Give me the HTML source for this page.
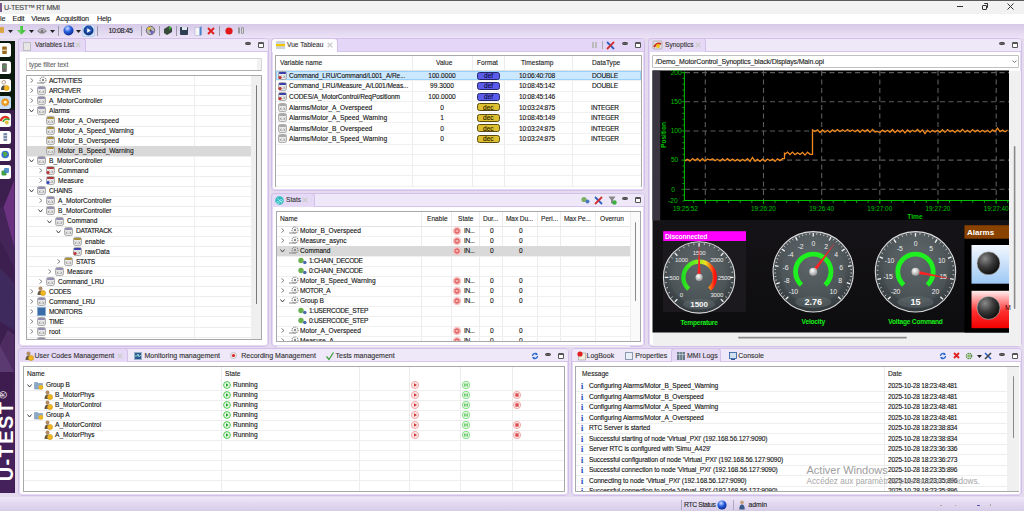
<!DOCTYPE html><html><head><meta charset="utf-8"><style>
*{margin:0;padding:0;box-sizing:border-box}
html,body{width:1024px;height:511px;overflow:hidden}
body{position:relative;background:#e4dbef;font-family:"Liberation Sans",sans-serif;font-size:7.5px;letter-spacing:0;color:#111}
.t{transform-origin:0 50%;transform:scaleX(0.88)}
.c{transform-origin:50% 50%;transform:translateX(-50%) scaleX(0.88)}
div{position:absolute}
.t,.c{height:10px;line-height:10px;white-space:nowrap;-webkit-text-stroke:0.12px currentColor}
svg{position:absolute;overflow:visible}
</style></head><body>
<div style="left:0px;top:0px;width:1024px;height:14px;background:#f2f2f2;border-top:1px solid #5a5a5a"></div>
<div style="left:0px;top:3px;width:2px;height:9px;background:#7a5a8a"></div>
<div class="t" style="left:4px;top:2.9000000000000004px;font-size:7.2px;letter-spacing:-0.35px;color:#444;transform:none">U-TEST™ RT MMI</div>
<div style="left:957px;top:6px;width:6px;height:1.1px;background:#333"></div>
<div style="left:982px;top:4.5px;width:5px;height:5px;border:1.1px solid #333;border-radius:1px"></div>
<div style="left:983.5px;top:3px;width:4.5px;height:4.5px;border-top:1px solid #333;border-right:1px solid #333;border-radius:1px"></div>
<svg style="left:1007px;top:3px" width="7" height="7"><path d="M0.5 0.5L6.5 6.5M6.5 0.5L0.5 6.5" stroke="#333" stroke-width="1"/></svg>
<div style="left:0px;top:14px;width:1024px;height:10px;background:#ffffff"></div>
<div class="t" style="left:0px;top:14.4px;font-size:7.2px;letter-spacing:-0.15px;color:#222;transform:none">le</div>
<div class="t" style="left:12.5px;top:14.4px;font-size:7.2px;letter-spacing:-0.15px;color:#222;transform:none">Edit</div>
<div class="t" style="left:31.3px;top:14.4px;font-size:7.2px;letter-spacing:-0.15px;color:#222;transform:none">Views</div>
<div class="t" style="left:55.8px;top:14.4px;font-size:7.2px;letter-spacing:-0.15px;color:#222;transform:none">Acquisition</div>
<div class="t" style="left:96.9px;top:14.4px;font-size:7.2px;letter-spacing:-0.15px;color:#222;transform:none">Help</div>
<div style="left:0px;top:24px;width:1024px;height:13.5px;background:linear-gradient(#d5c9e7,#ece3f7)"></div>
<div style="left:0px;top:27px;width:4px;height:6px;background:#d9a441;border-radius:1px"></div>
<svg style="left:8px;top:29.5px" width="5" height="3"><path d="M0 0H5L2.5 3Z" fill="#222"/></svg>
<svg style="left:17px;top:25px" width="9" height="11"><path d="M3 1H6V5H9L4.5 9.5L0 5H3Z" fill="#48c040"/><path d="M3 1H4.5V9.5L0 5H3Z" fill="#7ad870" opacity="0.6"/></svg>
<svg style="left:29px;top:29.5px" width="5" height="3"><path d="M0 0H5L2.5 3Z" fill="#222"/></svg>
<svg style="left:37px;top:26px" width="10" height="9"><path d="M1 5Q5 0 9 5Q5 9 1 5Z" fill="none" stroke="#888" stroke-width="1.2"/><circle cx="5" cy="5" r="1.6" fill="#777"/></svg>
<svg style="left:50px;top:29.5px" width="5" height="3"><path d="M0 0H5L2.5 3Z" fill="#222"/></svg>
<div style="left:58px;top:26px;width:1px;height:10px;background:#9a9aa5"></div>
<svg style="left:63px;top:25px" width="11" height="11"><defs><radialGradient id="bs" cx="0.4" cy="0.3" r="0.7"><stop offset="0" stop-color="#cfe0ff"/><stop offset="0.5" stop-color="#2a5fe0"/><stop offset="1" stop-color="#0a2a90"/></radialGradient></defs><circle cx="5.5" cy="5.5" r="5" fill="url(#bs)"/></svg>
<svg style="left:76px;top:29.5px" width="5" height="3"><path d="M0 0H5L2.5 3Z" fill="#222"/></svg>
<div style="left:82px;top:24.5px;width:13px;height:12px;background:#cfe2f8;border:1px solid #bcd4f0;border-radius:1px"></div>
<svg style="left:83px;top:25px" width="11" height="11"><circle cx="5.5" cy="5.5" r="5" fill="#163a8a"/><circle cx="5.5" cy="4.5" r="3.5" fill="#2a62c8" opacity="0.7"/><path d="M4.2 3.2L7.8 5.5L4.2 7.8Z" fill="#fff"/></svg>
<div style="left:97px;top:26px;width:1px;height:10px;background:#9a9aa5"></div>
<div class="t" style="left:108.5px;top:25.9px;font-size:7px;letter-spacing:-0.4px;color:#222;transform:none">10:08:45</div>
<div style="left:141px;top:26px;width:1px;height:10px;background:#9a9aa5"></div>
<svg style="left:146px;top:26px" width="9" height="9"><circle cx="4.5" cy="4.5" r="4.2" fill="#b8b8b8" stroke="#555" stroke-width="0.8"/><path d="M4.5 4.5L4.5 0.8A3.7 3.7 0 0 0 1 3Z" fill="#e8c030"/><path d="M4.5 4.5L8 5.5A3.7 3.7 0 0 1 5 8.2Z" fill="#6a5ad0"/><circle cx="4.5" cy="4.5" r="1" fill="#444"/></svg>
<div style="left:159px;top:26px;width:1px;height:10px;background:#9a9aa5"></div>
<svg style="left:163px;top:25px" width="10" height="10"><path d="M1 4L6 1L9 3V7L4 10L1 8Z" fill="#3a4a3a"/><path d="M6 1L9 3L6 5Z" fill="#3caa3c"/></svg>
<div style="left:176px;top:26px;width:1px;height:10px;background:#9a9aa5"></div>
<div style="left:180px;top:26.5px;width:8px;height:8px;background:#2c3e50;border-radius:1px"></div>
<div style="left:181.5px;top:27px;width:5px;height:3px;background:#dfe6ee"></div>
<svg style="left:194px;top:25.5px" width="8" height="10"><path d="M1 1.5H5.5L7.5 0.5V9L5.5 9.5H1Z" fill="#f4f6fa" stroke="#aab" stroke-width="0.5"/><path d="M5.5 1.5L7.5 0.5V9L5.5 9.5Z" fill="#4a80d0"/></svg>
<svg style="left:207px;top:26.5px" width="8" height="8"><path d="M1 1L7 7M7 1L1 7" stroke="#e02020" stroke-width="2"/></svg>
<div style="left:219px;top:26px;width:1px;height:10px;background:#9a9aa5"></div>
<svg style="left:225px;top:26.5px" width="8" height="8"><circle cx="4" cy="4" r="3.6" fill="#e01818"/></svg>
<div style="left:237.5px;top:27px;width:2.4px;height:7px;background:#d8d8d8;border:0.6px solid #999;border-radius:1px"></div>
<div style="left:241.2px;top:27px;width:2.4px;height:7px;background:#d8d8d8;border:0.6px solid #999;border-radius:1px"></div>
<div style="left:0px;top:41px;width:14.5px;height:452px;background:linear-gradient(180deg,#0a180e 0px,#0a180e 66px,#2a0f3a 72px,#3f1a55 120px,#4a2462 200px,#3a1650 290px,#4c2664 360px,#3a1550 452px)"></div>
<svg style="left:0;top:0" width="15" height="511"><rect x="0" y="110" width="14.3" height="383" fill="#3d1f4f"/><path d="M14.3 180L3.4 207.6L14.3 248Z" fill="#6a3280"/><path d="M0 207.6L3.4 207.6L14.3 248L14.3 268L0 240Z" fill="#45245a"/><path d="M0 268L14.3 283L14.3 330L0 322Z" fill="#3f2a5e"/><path d="M0 345L14.3 372L14.3 335L8 330Z" fill="#4e2c62"/><path d="M0 345L14.3 372L0 372Z" fill="#5a3a70"/><path d="M0 372L14.3 372L14.3 493L0 493Z" fill="#3f1c50"/><path d="M0 430L14.3 400L14.3 493L0 493Z" fill="#44215a"/></svg>
<div style="left:0px;top:43.3px;width:11.2px;height:13.3px;background:#ffffff;border-radius:0 2.5px 2.5px 0"></div>
<div style="left:0px;top:61px;width:11.2px;height:13.3px;background:#ffffff;border-radius:0 2.5px 2.5px 0"></div>
<div style="left:0px;top:78.6px;width:11.2px;height:13.3px;background:#ffffff;border-radius:0 2.5px 2.5px 0"></div>
<div style="left:0px;top:95.6px;width:11.2px;height:13.3px;background:#c6def5;border-radius:0 2.5px 2.5px 0"></div>
<div style="left:0px;top:113.3px;width:11.2px;height:13.3px;background:#ffffff;border-radius:0 2.5px 2.5px 0"></div>
<div style="left:0px;top:130.5px;width:11.2px;height:13.3px;background:#ffffff;border-radius:0 2.5px 2.5px 0"></div>
<div style="left:0px;top:148px;width:11.2px;height:13.3px;background:#ffffff;border-radius:0 2.5px 2.5px 0"></div>
<div style="left:0px;top:165.3px;width:11.2px;height:13.3px;background:#ffffff;border-radius:0 2.5px 2.5px 0"></div>
<svg style="left:0;top:0" width="15" height="185"><rect x="2.2" y="46.5" width="4.6" height="7.5" rx="0.8" fill="#9a6a1e"/><rect x="2.2" y="49.6" width="4.6" height="1.2" fill="#f0e0c0"/><rect x="2" y="63.2" width="4.8" height="8.8" rx="1" fill="#6e6a6a"/><rect x="2.8" y="65" width="3.2" height="3" fill="#5a8a5a"/><circle cx="3.8" cy="82.3" r="1.8" fill="none" stroke="#a08060" stroke-width="0.8"/><path d="M1 90Q1 85.5 3.8 85.5Q6.5 85.5 6.5 90Z" fill="#4a4a4a"/><circle cx="6.6" cy="88" r="2.6" fill="#f2b81e" stroke="#c8901a" stroke-width="0.5"/><circle cx="5.2" cy="102.2" r="3.4" fill="#f0a020" stroke="#e08010" stroke-width="1.2" stroke-dasharray="1 0.8"/><circle cx="5.2" cy="102.2" r="1.4" fill="#fff6d0"/><path d="M0.8 121A4.5 4.5 0 0 1 9 119" stroke="#e03020" stroke-width="2.2" fill="none"/><path d="M3 122A4 4 0 0 1 9.5 120" stroke="#40a030" stroke-width="1.6" fill="none"/><circle cx="6.8" cy="122.5" r="2" fill="#e0c040"/><rect x="3.5" y="133" width="3.6" height="8" fill="#7a8aa8"/><path d="M3.5 135.5h3.6M3.5 138.5h3.6" stroke="#dde" stroke-width="0.8"/><circle cx="5.2" cy="154.5" r="3.8" fill="#3a70d0"/><path d="M3 152Q6 151 7.5 154Q6 157 4 157" fill="#50b040"/><rect x="1.5" y="170.5" width="5" height="5" rx="1" fill="#40a040"/><rect x="4" y="168" width="5" height="5" rx="1" fill="#3a80c0" opacity="0.85"/></svg>
<svg style="left:0;top:380px" width="15" height="113"><text transform="translate(12.8,101.3) rotate(-90)" font-family="Liberation Sans" font-weight="bold" font-size="20" letter-spacing="1.4" fill="#fff">U-TEST</text><text transform="translate(6.6,18.6) rotate(-90)" font-family="Liberation Sans" font-size="10" fill="#fff">®</text></svg>
<div style="left:18px;top:38px;width:251px;height:309.3px;background:#fff;border:1px solid #d3c0ea;border-radius:4px;box-shadow:inset 0 0 0 1px #e6d9f4"></div>
<div style="left:19px;top:39px;width:249px;height:13px;background:#eee8f8;border-bottom:1px solid #d6c4ec;border-radius:3px 3px 0 0"></div>
<div style="left:18px;top:38px;width:68px;height:14px;background:#e6d9f5;border:1px solid #d3c0ea;border-bottom:none;border-radius:4px 4px 0 0"></div>
<div style="left:244.5px;top:41.5px;width:6.2px;height:3px;background:#666;border:0.6px solid #444;border-radius:1.5px"></div>
<div style="left:257.5px;top:41.7px;width:6.2px;height:6.2px;border:1px solid #555;border-top-width:2px;border-radius:1.2px;background:#fff"></div>
<div style="left:270.5px;top:38px;width:374.5px;height:153.2px;background:#fff;border:1px solid #d3c0ea;border-radius:4px;box-shadow:inset 0 0 0 1px #e6d9f4"></div>
<div style="left:271.5px;top:39px;width:372.5px;height:13px;background:#e4d6f7;border-bottom:1px solid #d6c4ec;border-radius:3px 3px 0 0"></div>
<div style="left:270.5px;top:38px;width:67.5px;height:14px;background:#fdfcff;border:1px solid #d3c0ea;border-bottom:none;border-radius:4px 4px 0 0"></div>
<div style="left:622.3px;top:41.5px;width:6.2px;height:3px;background:#666;border:0.6px solid #444;border-radius:1.5px"></div>
<div style="left:634.9px;top:41.7px;width:6.2px;height:6.2px;border:1px solid #555;border-top-width:2px;border-radius:1.2px;background:#fff"></div>
<div style="left:270.5px;top:192.5px;width:374.5px;height:154.8px;background:#fff;border:1px solid #d3c0ea;border-radius:4px;box-shadow:inset 0 0 0 1px #e6d9f4"></div>
<div style="left:271.5px;top:193.5px;width:372.5px;height:13px;background:#eee8f8;border-bottom:1px solid #d6c4ec;border-radius:3px 3px 0 0"></div>
<div style="left:270.5px;top:192.5px;width:44.5px;height:14px;background:#e6d9f5;border:1px solid #d3c0ea;border-bottom:none;border-radius:4px 4px 0 0"></div>
<div style="left:622.3px;top:197px;width:6.2px;height:3px;background:#666;border:0.6px solid #444;border-radius:1.5px"></div>
<div style="left:634.9px;top:197.2px;width:6.2px;height:6.2px;border:1px solid #555;border-top-width:2px;border-radius:1.2px;background:#fff"></div>
<div style="left:648px;top:38px;width:374px;height:309.3px;background:#fff;border:1px solid #d3c0ea;border-radius:4px;box-shadow:inset 0 0 0 1px #e6d9f4"></div>
<div style="left:649px;top:39px;width:372px;height:13px;background:#eee8f8;border-bottom:1px solid #d6c4ec;border-radius:3px 3px 0 0"></div>
<div style="left:648px;top:38px;width:58px;height:14px;background:#e6d9f5;border:1px solid #d3c0ea;border-bottom:none;border-radius:4px 4px 0 0"></div>
<div style="left:999.0px;top:41.5px;width:6.2px;height:3px;background:#666;border:0.6px solid #444;border-radius:1.5px"></div>
<div style="left:1012.0px;top:41.7px;width:6.2px;height:6.2px;border:1px solid #555;border-top-width:2px;border-radius:1.2px;background:#fff"></div>
<div style="left:18px;top:348px;width:550.5px;height:148.3px;background:#fff;border:1px solid #d3c0ea;border-radius:4px;box-shadow:inset 0 0 0 1px #e6d9f4"></div>
<div style="left:19px;top:349px;width:548.5px;height:13px;background:#eee8f8;border-bottom:1px solid #d6c4ec;border-radius:3px 3px 0 0"></div>
<div style="left:18px;top:348px;width:109.5px;height:14px;background:#e6d9f5;border:1px solid #d3c0ea;border-bottom:none;border-radius:4px 4px 0 0"></div>
<div style="left:545.0px;top:352.5px;width:6.2px;height:3px;background:#666;border:0.6px solid #444;border-radius:1.5px"></div>
<div style="left:557.5px;top:352.7px;width:6.2px;height:6.2px;border:1px solid #555;border-top-width:2px;border-radius:1.2px;background:#fff"></div>
<div style="left:570.5px;top:348px;width:451.5px;height:148.3px;background:#fff;border:1px solid #d3c0ea;border-radius:4px;box-shadow:inset 0 0 0 1px #e6d9f4"></div>
<div style="left:571.5px;top:349px;width:449.5px;height:13px;background:#eee8f8;border-bottom:1px solid #d6c4ec;border-radius:3px 3px 0 0"></div>
<div style="left:671px;top:348px;width:50px;height:14px;background:#e6d9f5;border:1px solid #d3c0ea;border-bottom:none;border-radius:4px 4px 0 0"></div>
<div style="left:999.0px;top:352.5px;width:6.2px;height:3px;background:#666;border:0.6px solid #444;border-radius:1.5px"></div>
<div style="left:1012.0px;top:352.7px;width:6.2px;height:6.2px;border:1px solid #555;border-top-width:2px;border-radius:1.2px;background:#fff"></div>
<div style="left:23px;top:42px;width:8px;height:9px;background:#e6e6e6;border:1px solid #bdbdbd"></div>
<div class="t" style="left:34.7px;top:40.4px;color:#333">Variables List</div>
<svg style="left:75px;top:42px" width="6" height="6"><path d="M0.7 0.7L5.3 5.3M5.3 0.7L0.7 5.3" stroke="#cdcdcd" stroke-width="1.4"/></svg>
<div style="left:25.5px;top:58.2px;width:236px;height:12.5px;background:#fff;border:1px solid #d6d6d6;border-bottom-color:#b0b0b0"></div>
<div style="left:257px;top:59.2px;width:4px;height:10.5px;background:#f2f2f2"></div>
<div class="t" style="left:29px;top:59.9px;color:#666">type filter text</div>
<div style="left:25.5px;top:74.6px;width:236.5px;height:265.4px;background:#fff;border:1px solid #a8a8a8"></div>
<div style="left:251.3px;top:75.5px;width:10px;height:263px;background:#efefef"></div>
<div style="left:256px;top:84.7px;width:1.3px;height:219.3px;background:#7a7a7a;border-radius:1px"></div>
<div style="left:194px;top:75.5px;width:1px;height:263px;background:#eeeeee"></div>
<div style="left:26.5px;top:85.3px;width:224.5px;height:1px;background:#ededed"></div>
<div style="left:26.5px;top:95.35px;width:224.5px;height:1px;background:#ededed"></div>
<div style="left:26.5px;top:105.4px;width:224.5px;height:1px;background:#ededed"></div>
<div style="left:26.5px;top:115.45px;width:224.5px;height:1px;background:#ededed"></div>
<div style="left:26.5px;top:125.5px;width:224.5px;height:1px;background:#ededed"></div>
<div style="left:26.5px;top:135.55px;width:224.5px;height:1px;background:#ededed"></div>
<div style="left:26.5px;top:145.6px;width:224.5px;height:1px;background:#ededed"></div>
<div style="left:26.5px;top:155.65px;width:224.5px;height:1px;background:#ededed"></div>
<div style="left:26.5px;top:165.7px;width:224.5px;height:1px;background:#ededed"></div>
<div style="left:26.5px;top:175.75px;width:224.5px;height:1px;background:#ededed"></div>
<div style="left:26.5px;top:185.8px;width:224.5px;height:1px;background:#ededed"></div>
<div style="left:26.5px;top:195.85000000000002px;width:224.5px;height:1px;background:#ededed"></div>
<div style="left:26.5px;top:205.9px;width:224.5px;height:1px;background:#ededed"></div>
<div style="left:26.5px;top:215.95px;width:224.5px;height:1px;background:#ededed"></div>
<div style="left:26.5px;top:226.0px;width:224.5px;height:1px;background:#ededed"></div>
<div style="left:26.5px;top:236.05px;width:224.5px;height:1px;background:#ededed"></div>
<div style="left:26.5px;top:246.10000000000002px;width:224.5px;height:1px;background:#ededed"></div>
<div style="left:26.5px;top:256.15000000000003px;width:224.5px;height:1px;background:#ededed"></div>
<div style="left:26.5px;top:266.2px;width:224.5px;height:1px;background:#ededed"></div>
<div style="left:26.5px;top:276.25px;width:224.5px;height:1px;background:#ededed"></div>
<div style="left:26.5px;top:286.3px;width:224.5px;height:1px;background:#ededed"></div>
<div style="left:26.5px;top:296.35px;width:224.5px;height:1px;background:#ededed"></div>
<div style="left:26.5px;top:306.40000000000003px;width:224.5px;height:1px;background:#ededed"></div>
<div style="left:26.5px;top:316.45px;width:224.5px;height:1px;background:#ededed"></div>
<div style="left:26.5px;top:326.5px;width:224.5px;height:1px;background:#ededed"></div>
<div style="left:26.5px;top:336.55px;width:224.5px;height:1px;background:#ededed"></div>
<div style="left:26.5px;top:145.6px;width:224.5px;height:10px;background:#d9d9d9"></div>
<div style="left:0;top:0;width:260px;height:339px;overflow:hidden">
<svg style="left:30.0px;top:77.8px" width="4" height="5"><path d="M0.5 0.5L3 2.5L0.5 4.5" fill="none" stroke="#707070" stroke-width="0.85"/></svg>
<svg style="left:37px;top:75.8px" width="10" height="9"><circle cx="6" cy="4" r="3" fill="none" stroke="#8a8a8a" stroke-width="1.2" stroke-dasharray="1.2 0.8"/><circle cx="6" cy="4" r="1.2" fill="#8a8a8a"/><path d="M0 7h7" stroke="#8a8a8a" stroke-width="1"/></svg>
<div class="t" style="left:48.5px;top:75.7px;letter-spacing:-0.35px;color:#111">ACTIVITIES</div>
<svg style="left:30.0px;top:87.85px" width="4" height="5"><path d="M0.5 0.5L3 2.5L0.5 4.5" fill="none" stroke="#707070" stroke-width="0.85"/></svg>
<svg style="left:37px;top:85.85px" width="9" height="9"><rect x="0.5" y="0.5" width="8" height="8" rx="1.8" fill="#e9e9e9" stroke="#9a9a9a" stroke-width="0.8"/><rect x="0.9" y="0.9" width="7.2" height="2.2" rx="1" fill="#948cb0"/><path d="M1.8 4.6l1.6 2.4M3.4 4.6l-1.6 2.4M4.3 6.6h0.6M5.6 4.6l1.6 2.4M7.2 4.6l-1.6 2.4" stroke="#8a8a8a" stroke-width="0.6"/></svg>
<div class="t" style="left:48.5px;top:85.75px;letter-spacing:-0.35px;color:#111">ARCHIVER</div>
<svg style="left:30.0px;top:97.9px" width="4" height="5"><path d="M0.5 0.5L3 2.5L0.5 4.5" fill="none" stroke="#707070" stroke-width="0.85"/></svg>
<svg style="left:37px;top:95.9px" width="9" height="9"><rect x="0.5" y="0.5" width="8" height="8" rx="1.8" fill="#e9e9e9" stroke="#9a9a9a" stroke-width="0.8"/><rect x="0.9" y="0.9" width="7.2" height="2.2" rx="1" fill="#948cb0"/><path d="M1.8 4.6l1.6 2.4M3.4 4.6l-1.6 2.4M4.3 6.6h0.6M5.6 4.6l1.6 2.4M7.2 4.6l-1.6 2.4" stroke="#8a8a8a" stroke-width="0.6"/></svg>
<div class="t" style="left:48.5px;top:95.80000000000001px;color:#111">A_MotorController</div>
<svg style="left:29.0px;top:108.95px" width="5" height="4"><path d="M0.5 0.5L2.5 3L4.5 0.5" fill="none" stroke="#3a3a3a" stroke-width="0.95"/></svg>
<svg style="left:37px;top:105.95px" width="9" height="9"><rect x="0.5" y="0.5" width="8" height="8" rx="1.8" fill="#e9e9e9" stroke="#9a9a9a" stroke-width="0.8"/><rect x="0.9" y="0.9" width="7.2" height="2.2" rx="1" fill="#948cb0"/><path d="M1.8 4.6l1.6 2.4M3.4 4.6l-1.6 2.4M4.3 6.6h0.6M5.6 4.6l1.6 2.4M7.2 4.6l-1.6 2.4" stroke="#8a8a8a" stroke-width="0.6"/></svg>
<div class="t" style="left:48.5px;top:105.85000000000001px;color:#111">Alarms</div>
<svg style="left:46px;top:116.0px" width="9" height="9"><rect x="0.5" y="0.5" width="8" height="8" rx="1.8" fill="#e9e9e9" stroke="#9a9a9a" stroke-width="0.8"/><rect x="0.9" y="0.9" width="7.2" height="2.2" rx="1" fill="#a89038"/><path d="M1.8 4.6l1.6 2.4M3.4 4.6l-1.6 2.4M4.3 6.6h0.6M5.6 4.6l1.6 2.4M7.2 4.6l-1.6 2.4" stroke="#8a8a8a" stroke-width="0.6"/></svg>
<div class="t" style="left:57.5px;top:115.9px;color:#111">Motor_A_Overspeed</div>
<svg style="left:46px;top:126.05000000000001px" width="9" height="9"><rect x="0.5" y="0.5" width="8" height="8" rx="1.8" fill="#e9e9e9" stroke="#9a9a9a" stroke-width="0.8"/><rect x="0.9" y="0.9" width="7.2" height="2.2" rx="1" fill="#a89038"/><path d="M1.8 4.6l1.6 2.4M3.4 4.6l-1.6 2.4M4.3 6.6h0.6M5.6 4.6l1.6 2.4M7.2 4.6l-1.6 2.4" stroke="#8a8a8a" stroke-width="0.6"/></svg>
<div class="t" style="left:57.5px;top:125.95000000000002px;color:#111">Motor_A_Speed_Warning</div>
<svg style="left:46px;top:136.1px" width="9" height="9"><rect x="0.5" y="0.5" width="8" height="8" rx="1.8" fill="#e9e9e9" stroke="#9a9a9a" stroke-width="0.8"/><rect x="0.9" y="0.9" width="7.2" height="2.2" rx="1" fill="#a89038"/><path d="M1.8 4.6l1.6 2.4M3.4 4.6l-1.6 2.4M4.3 6.6h0.6M5.6 4.6l1.6 2.4M7.2 4.6l-1.6 2.4" stroke="#8a8a8a" stroke-width="0.6"/></svg>
<div class="t" style="left:57.5px;top:136.0px;color:#111">Motor_B_Overspeed</div>
<svg style="left:46px;top:146.15px" width="9" height="9"><rect x="0.5" y="0.5" width="8" height="8" rx="1.8" fill="#e9e9e9" stroke="#9a9a9a" stroke-width="0.8"/><rect x="0.9" y="0.9" width="7.2" height="2.2" rx="1" fill="#a89038"/><path d="M1.8 4.6l1.6 2.4M3.4 4.6l-1.6 2.4M4.3 6.6h0.6M5.6 4.6l1.6 2.4M7.2 4.6l-1.6 2.4" stroke="#8a8a8a" stroke-width="0.6"/></svg>
<div class="t" style="left:57.5px;top:146.05px;color:#111">Motor_B_Speed_Warning</div>
<svg style="left:29.0px;top:159.2px" width="5" height="4"><path d="M0.5 0.5L2.5 3L4.5 0.5" fill="none" stroke="#3a3a3a" stroke-width="0.95"/></svg>
<svg style="left:37px;top:156.2px" width="9" height="9"><rect x="0.5" y="0.5" width="8" height="8" rx="1.8" fill="#e9e9e9" stroke="#9a9a9a" stroke-width="0.8"/><rect x="0.9" y="0.9" width="7.2" height="2.2" rx="1" fill="#948cb0"/><path d="M1.8 4.6l1.6 2.4M3.4 4.6l-1.6 2.4M4.3 6.6h0.6M5.6 4.6l1.6 2.4M7.2 4.6l-1.6 2.4" stroke="#8a8a8a" stroke-width="0.6"/></svg>
<div class="t" style="left:48.5px;top:156.1px;color:#111">B_MotorController</div>
<svg style="left:39.0px;top:168.25px" width="4" height="5"><path d="M0.5 0.5L3 2.5L0.5 4.5" fill="none" stroke="#707070" stroke-width="0.85"/></svg>
<svg style="left:46px;top:166.25px" width="9" height="9"><rect x="0.5" y="0.5" width="8" height="8" rx="1.8" fill="#e9e9e9" stroke="#9a9a9a" stroke-width="0.8"/><rect x="0.9" y="0.9" width="7.2" height="2.2" rx="1" fill="#b03a3a"/><path d="M1.8 4.6l1.6 2.4M3.4 4.6l-1.6 2.4M4.3 6.6h0.6M5.6 4.6l1.6 2.4M7.2 4.6l-1.6 2.4" stroke="#8a8a8a" stroke-width="0.6"/><circle cx="2" cy="6.5" r="1.5" fill="#c03030"/></svg>
<div class="t" style="left:57.5px;top:166.15px;color:#111">Command</div>
<svg style="left:39.0px;top:178.3px" width="4" height="5"><path d="M0.5 0.5L3 2.5L0.5 4.5" fill="none" stroke="#707070" stroke-width="0.85"/></svg>
<svg style="left:46px;top:176.3px" width="9" height="9"><rect x="0.5" y="0.5" width="8" height="8" rx="1.8" fill="#e9e9e9" stroke="#9a9a9a" stroke-width="0.8"/><rect x="0.9" y="0.9" width="7.2" height="2.2" rx="1" fill="#b03a3a"/><path d="M1.8 4.6l1.6 2.4M3.4 4.6l-1.6 2.4M4.3 6.6h0.6M5.6 4.6l1.6 2.4M7.2 4.6l-1.6 2.4" stroke="#8a8a8a" stroke-width="0.6"/><circle cx="2" cy="6.5" r="1.5" fill="#3040c0"/></svg>
<div class="t" style="left:57.5px;top:176.20000000000002px;color:#111">Measure</div>
<svg style="left:29.0px;top:189.35000000000002px" width="5" height="4"><path d="M0.5 0.5L2.5 3L4.5 0.5" fill="none" stroke="#3a3a3a" stroke-width="0.95"/></svg>
<svg style="left:37px;top:186.35000000000002px" width="9" height="9"><rect x="0.5" y="0.5" width="8" height="8" rx="1.8" fill="#e9e9e9" stroke="#9a9a9a" stroke-width="0.8"/><rect x="0.9" y="0.9" width="7.2" height="2.2" rx="1" fill="#948cb0"/><path d="M1.8 4.6l1.6 2.4M3.4 4.6l-1.6 2.4M4.3 6.6h0.6M5.6 4.6l1.6 2.4M7.2 4.6l-1.6 2.4" stroke="#8a8a8a" stroke-width="0.6"/></svg>
<div class="t" style="left:48.5px;top:186.25000000000003px;letter-spacing:-0.35px;color:#111">CHAINS</div>
<svg style="left:39.0px;top:198.4px" width="4" height="5"><path d="M0.5 0.5L3 2.5L0.5 4.5" fill="none" stroke="#707070" stroke-width="0.85"/></svg>
<svg style="left:46px;top:196.4px" width="9" height="9"><rect x="0.5" y="0.5" width="8" height="8" rx="1.8" fill="#e9e9e9" stroke="#9a9a9a" stroke-width="0.8"/><rect x="0.9" y="0.9" width="7.2" height="2.2" rx="1" fill="#948cb0"/><path d="M1.8 4.6l1.6 2.4M3.4 4.6l-1.6 2.4M4.3 6.6h0.6M5.6 4.6l1.6 2.4M7.2 4.6l-1.6 2.4" stroke="#8a8a8a" stroke-width="0.6"/></svg>
<div class="t" style="left:57.5px;top:196.3px;color:#111">A_MotorController</div>
<svg style="left:38.0px;top:209.45px" width="5" height="4"><path d="M0.5 0.5L2.5 3L4.5 0.5" fill="none" stroke="#3a3a3a" stroke-width="0.95"/></svg>
<svg style="left:46px;top:206.45px" width="9" height="9"><rect x="0.5" y="0.5" width="8" height="8" rx="1.8" fill="#e9e9e9" stroke="#9a9a9a" stroke-width="0.8"/><rect x="0.9" y="0.9" width="7.2" height="2.2" rx="1" fill="#948cb0"/><path d="M1.8 4.6l1.6 2.4M3.4 4.6l-1.6 2.4M4.3 6.6h0.6M5.6 4.6l1.6 2.4M7.2 4.6l-1.6 2.4" stroke="#8a8a8a" stroke-width="0.6"/></svg>
<div class="t" style="left:57.5px;top:206.35px;color:#111">B_MotorController</div>
<svg style="left:47.0px;top:219.5px" width="5" height="4"><path d="M0.5 0.5L2.5 3L4.5 0.5" fill="none" stroke="#3a3a3a" stroke-width="0.95"/></svg>
<svg style="left:55px;top:216.5px" width="9" height="9"><rect x="0.5" y="0.5" width="8" height="8" rx="1.8" fill="#e9e9e9" stroke="#9a9a9a" stroke-width="0.8"/><rect x="0.9" y="0.9" width="7.2" height="2.2" rx="1" fill="#948cb0"/><path d="M1.8 4.6l1.6 2.4M3.4 4.6l-1.6 2.4M4.3 6.6h0.6M5.6 4.6l1.6 2.4M7.2 4.6l-1.6 2.4" stroke="#8a8a8a" stroke-width="0.6"/></svg>
<div class="t" style="left:66.5px;top:216.4px;color:#111">Command</div>
<svg style="left:56.0px;top:229.55px" width="5" height="4"><path d="M0.5 0.5L2.5 3L4.5 0.5" fill="none" stroke="#3a3a3a" stroke-width="0.95"/></svg>
<svg style="left:64px;top:226.55px" width="9" height="9"><rect x="0.5" y="0.5" width="8" height="8" rx="1.8" fill="#e9e9e9" stroke="#9a9a9a" stroke-width="0.8"/><rect x="0.9" y="0.9" width="7.2" height="2.2" rx="1" fill="#948cb0"/><path d="M1.8 4.6l1.6 2.4M3.4 4.6l-1.6 2.4M4.3 6.6h0.6M5.6 4.6l1.6 2.4M7.2 4.6l-1.6 2.4" stroke="#8a8a8a" stroke-width="0.6"/></svg>
<div class="t" style="left:75.5px;top:226.45000000000002px;letter-spacing:-0.35px;color:#111">DATATRACK</div>
<svg style="left:73px;top:236.60000000000002px" width="9" height="9"><rect x="0.5" y="0.5" width="8" height="8" rx="1.8" fill="#e9e9e9" stroke="#9a9a9a" stroke-width="0.8"/><rect x="0.9" y="0.9" width="7.2" height="2.2" rx="1" fill="#a89038"/><path d="M1.8 4.6l1.6 2.4M3.4 4.6l-1.6 2.4M4.3 6.6h0.6M5.6 4.6l1.6 2.4M7.2 4.6l-1.6 2.4" stroke="#8a8a8a" stroke-width="0.6"/></svg>
<div class="t" style="left:84.5px;top:236.50000000000003px;color:#111">enable</div>
<svg style="left:73px;top:246.65000000000003px" width="9" height="9"><rect x="0.5" y="0.5" width="8" height="8" rx="1.8" fill="#e9e9e9" stroke="#9a9a9a" stroke-width="0.8"/><rect x="0.9" y="0.9" width="7.2" height="2.2" rx="1" fill="#3a40a8"/><path d="M1.8 4.6l1.6 2.4M3.4 4.6l-1.6 2.4M4.3 6.6h0.6M5.6 4.6l1.6 2.4M7.2 4.6l-1.6 2.4" stroke="#8a8a8a" stroke-width="0.6"/><circle cx="2" cy="6.5" r="1.5" fill="#c03030"/></svg>
<div class="t" style="left:84.5px;top:246.55000000000004px;color:#111">rawData</div>
<svg style="left:57.0px;top:258.7px" width="4" height="5"><path d="M0.5 0.5L3 2.5L0.5 4.5" fill="none" stroke="#707070" stroke-width="0.85"/></svg>
<svg style="left:64px;top:256.7px" width="9" height="9"><rect x="0.5" y="0.5" width="8" height="8" rx="1.8" fill="#e9e9e9" stroke="#9a9a9a" stroke-width="0.8"/><rect x="0.9" y="0.9" width="7.2" height="2.2" rx="1" fill="#a89038"/><path d="M1.8 4.6l1.6 2.4M3.4 4.6l-1.6 2.4M4.3 6.6h0.6M5.6 4.6l1.6 2.4M7.2 4.6l-1.6 2.4" stroke="#8a8a8a" stroke-width="0.6"/></svg>
<div class="t" style="left:75.5px;top:256.59999999999997px;letter-spacing:-0.35px;color:#111">STATS</div>
<svg style="left:48.0px;top:268.75px" width="4" height="5"><path d="M0.5 0.5L3 2.5L0.5 4.5" fill="none" stroke="#707070" stroke-width="0.85"/></svg>
<svg style="left:55px;top:266.75px" width="9" height="9"><rect x="0.5" y="0.5" width="8" height="8" rx="1.8" fill="#e9e9e9" stroke="#9a9a9a" stroke-width="0.8"/><rect x="0.9" y="0.9" width="7.2" height="2.2" rx="1" fill="#948cb0"/><path d="M1.8 4.6l1.6 2.4M3.4 4.6l-1.6 2.4M4.3 6.6h0.6M5.6 4.6l1.6 2.4M7.2 4.6l-1.6 2.4" stroke="#8a8a8a" stroke-width="0.6"/></svg>
<div class="t" style="left:66.5px;top:266.65px;color:#111">Measure</div>
<svg style="left:39.0px;top:278.8px" width="4" height="5"><path d="M0.5 0.5L3 2.5L0.5 4.5" fill="none" stroke="#707070" stroke-width="0.85"/></svg>
<svg style="left:46px;top:276.8px" width="9" height="9"><rect x="0.5" y="0.5" width="8" height="8" rx="1.8" fill="#e9e9e9" stroke="#9a9a9a" stroke-width="0.8"/><rect x="0.9" y="0.9" width="7.2" height="2.2" rx="1" fill="#948cb0"/><path d="M1.8 4.6l1.6 2.4M3.4 4.6l-1.6 2.4M4.3 6.6h0.6M5.6 4.6l1.6 2.4M7.2 4.6l-1.6 2.4" stroke="#8a8a8a" stroke-width="0.6"/></svg>
<div class="t" style="left:57.5px;top:276.7px;letter-spacing:-0.14px;color:#111">Command_LRU</div>
<svg style="left:30.0px;top:288.85px" width="4" height="5"><path d="M0.5 0.5L3 2.5L0.5 4.5" fill="none" stroke="#707070" stroke-width="0.85"/></svg>
<svg style="left:37px;top:286.35px" width="9" height="10"><circle cx="3.5" cy="2.5" r="2" fill="#b08a60"/><path d="M0.5 9Q0.5 4.5 3.5 4.5Q6.5 4.5 6.5 9Z" fill="#6a5a4a"/><circle cx="6" cy="7" r="2.6" fill="#f0b820" stroke="#c08a10" stroke-width="0.5"/></svg>
<div class="t" style="left:48.5px;top:286.75px;letter-spacing:-0.35px;color:#111">CODES</div>
<svg style="left:30.0px;top:298.90000000000003px" width="4" height="5"><path d="M0.5 0.5L3 2.5L0.5 4.5" fill="none" stroke="#707070" stroke-width="0.85"/></svg>
<svg style="left:37px;top:296.90000000000003px" width="9" height="9"><rect x="0.5" y="0.5" width="8" height="8" rx="1.8" fill="#e9e9e9" stroke="#9a9a9a" stroke-width="0.8"/><rect x="0.9" y="0.9" width="7.2" height="2.2" rx="1" fill="#948cb0"/><path d="M1.8 4.6l1.6 2.4M3.4 4.6l-1.6 2.4M4.3 6.6h0.6M5.6 4.6l1.6 2.4M7.2 4.6l-1.6 2.4" stroke="#8a8a8a" stroke-width="0.6"/></svg>
<div class="t" style="left:48.5px;top:296.8px;letter-spacing:-0.14px;color:#111">Command_LRU</div>
<svg style="left:30.0px;top:308.95px" width="4" height="5"><path d="M0.5 0.5L3 2.5L0.5 4.5" fill="none" stroke="#707070" stroke-width="0.85"/></svg>
<div style="left:37px;top:306.95px;width:9px;height:9px;background:#3a6aa8;border:1px solid #8aaad0"></div>
<div class="t" style="left:48.5px;top:306.84999999999997px;letter-spacing:-0.35px;color:#111">MONITORS</div>
<svg style="left:30.0px;top:319.0px" width="4" height="5"><path d="M0.5 0.5L3 2.5L0.5 4.5" fill="none" stroke="#707070" stroke-width="0.85"/></svg>
<svg style="left:37px;top:317.0px" width="9" height="9"><rect x="0.5" y="0.5" width="8" height="8" rx="1.8" fill="#e9e9e9" stroke="#9a9a9a" stroke-width="0.8"/><rect x="0.9" y="0.9" width="7.2" height="2.2" rx="1" fill="#948cb0"/><path d="M1.8 4.6l1.6 2.4M3.4 4.6l-1.6 2.4M4.3 6.6h0.6M5.6 4.6l1.6 2.4M7.2 4.6l-1.6 2.4" stroke="#8a8a8a" stroke-width="0.6"/></svg>
<div class="t" style="left:48.5px;top:316.9px;letter-spacing:-0.35px;color:#111">TIME</div>
<svg style="left:30.0px;top:329.05px" width="4" height="5"><path d="M0.5 0.5L3 2.5L0.5 4.5" fill="none" stroke="#707070" stroke-width="0.85"/></svg>
<svg style="left:37px;top:327.05px" width="9" height="9"><rect x="0.5" y="0.5" width="8" height="8" rx="1.8" fill="#e9e9e9" stroke="#9a9a9a" stroke-width="0.8"/><rect x="0.9" y="0.9" width="7.2" height="2.2" rx="1" fill="#948cb0"/><path d="M1.8 4.6l1.6 2.4M3.4 4.6l-1.6 2.4M4.3 6.6h0.6M5.6 4.6l1.6 2.4M7.2 4.6l-1.6 2.4" stroke="#8a8a8a" stroke-width="0.6"/></svg>
<div class="t" style="left:48.5px;top:326.95px;color:#111">root</div>
<svg style="left:30.0px;top:339.1px" width="4" height="5"><path d="M0.5 0.5L3 2.5L0.5 4.5" fill="none" stroke="#707070" stroke-width="0.85"/></svg>
<svg style="left:37px;top:337.1px" width="9" height="9"><rect x="0.5" y="0.5" width="8" height="8" rx="1.8" fill="#e9e9e9" stroke="#9a9a9a" stroke-width="0.8"/><rect x="0.9" y="0.9" width="7.2" height="2.2" rx="1" fill="#948cb0"/><path d="M1.8 4.6l1.6 2.4M3.4 4.6l-1.6 2.4M4.3 6.6h0.6M5.6 4.6l1.6 2.4M7.2 4.6l-1.6 2.4" stroke="#8a8a8a" stroke-width="0.6"/></svg>
<div class="t" style="left:48.5px;top:337.0px;color:#111">undefined</div>
</div>
<svg style="left:276px;top:41px" width="9" height="8"><rect x="0" y="0" width="9" height="8" fill="#c9d4df"/><rect x="0" y="3" width="9" height="2.2" fill="#f2c500"/></svg>
<div class="t" style="left:286.75px;top:40.4px;color:#333">Vue Tableau</div>
<svg style="left:327px;top:42px" width="6" height="6"><path d="M0.7 0.7L5.3 5.3M5.3 0.7L0.7 5.3" stroke="#cdcdcd" stroke-width="1.4"/></svg>
<div style="left:592px;top:42px;width:1.6px;height:6px;background:#bbb"></div>
<div style="left:595px;top:42px;width:1.6px;height:6px;background:#bbb"></div>
<div style="left:602px;top:41px;width:1px;height:8px;background:#aaa"></div>
<svg style="left:606px;top:41px" width="9" height="9"><path d="M1 1L8 8" stroke="#3060c0" stroke-width="1.8"/><path d="M8 1L1 8" stroke="#d03030" stroke-width="1.8"/></svg>
<div style="left:275px;top:55px;width:366.5px;height:131.5px;background:#fff;border:1px solid #a8a8a8"></div>
<div style="left:412px;top:56px;width:1px;height:130px;background:#ececec"></div>
<div style="left:472px;top:56px;width:1px;height:130px;background:#ececec"></div>
<div style="left:503.5px;top:56px;width:1px;height:130px;background:#ececec"></div>
<div style="left:571.5px;top:56px;width:1px;height:130px;background:#ececec"></div>
<div style="left:276px;top:69.5px;width:365px;height:1px;background:#e2e2e2"></div>
<div class="t" style="left:280px;top:58.4px;color:#222">Variable name</div>
<div class="t" style="left:436px;top:58.4px;color:#222">Value</div>
<div class="t" style="left:477px;top:58.4px;color:#222">Format</div>
<div class="t" style="left:521px;top:58.4px;color:#222">Timestamp</div>
<div class="t" style="left:592px;top:58.4px;color:#222">DataType</div>
<div style="left:276px;top:80.0px;width:365px;height:1px;background:#f0f0f0"></div>
<div style="left:276px;top:90.6px;width:365px;height:1px;background:#f0f0f0"></div>
<div style="left:276px;top:101.2px;width:365px;height:1px;background:#f0f0f0"></div>
<div style="left:276px;top:111.8px;width:365px;height:1px;background:#f0f0f0"></div>
<div style="left:276px;top:122.4px;width:365px;height:1px;background:#f0f0f0"></div>
<div style="left:276px;top:133.0px;width:365px;height:1px;background:#f0f0f0"></div>
<div style="left:276px;top:143.6px;width:365px;height:1px;background:#f0f0f0"></div>
<div style="left:276px;top:154.2px;width:365px;height:1px;background:#f0f0f0"></div>
<div style="left:276px;top:164.8px;width:365px;height:1px;background:#f0f0f0"></div>
<div style="left:276px;top:175.39999999999998px;width:365px;height:1px;background:#f0f0f0"></div>
<div style="left:276px;top:186.0px;width:365px;height:1px;background:#f0f0f0"></div>
<div style="left:276px;top:70.5px;width:365px;height:9.3px;background:#cce8ff;border:1px solid #99d1ff"></div>
<svg style="left:278px;top:71.0px" width="9" height="9"><rect x="0.5" y="0.5" width="8" height="8" rx="1.8" fill="#e9e9e9" stroke="#9a9a9a" stroke-width="0.8"/><rect x="0.9" y="0.9" width="7.2" height="2.2" rx="1" fill="#3a40a8"/><path d="M1.8 4.6l1.6 2.4M3.4 4.6l-1.6 2.4M4.3 6.6h0.6M5.6 4.6l1.6 2.4M7.2 4.6l-1.6 2.4" stroke="#8a8a8a" stroke-width="0.6"/><circle cx="2" cy="6.5" r="1.6" fill="#c03030"/></svg>
<div class="t" style="left:288.7px;top:70.9px;letter-spacing:-0.13px;color:#111">Command_LRU/Command/L001_A/Re...</div>
<div class="c" style="left:442px;top:70.9px;color:#111;">100.0000</div>
<div style="left:476.5px;top:71.5px;width:23px;height:8px;background:#5c5cec;border:1px solid #26266a;border-radius:2.5px"></div>
<div class="t" style="left:483.5px;top:70.9px;color:#0c0c3a">def</div>
<div class="c" style="left:536.7px;top:70.9px;letter-spacing:-0.24px;color:#111;">10:06:40:708</div>
<div class="c" style="left:605px;top:70.9px;letter-spacing:-0.24px;color:#111;">DOUBLE</div>
<svg style="left:278px;top:81.55px" width="9" height="9"><rect x="0.5" y="0.5" width="8" height="8" rx="1.8" fill="#e9e9e9" stroke="#9a9a9a" stroke-width="0.8"/><rect x="0.9" y="0.9" width="7.2" height="2.2" rx="1" fill="#3a40a8"/><path d="M1.8 4.6l1.6 2.4M3.4 4.6l-1.6 2.4M4.3 6.6h0.6M5.6 4.6l1.6 2.4M7.2 4.6l-1.6 2.4" stroke="#8a8a8a" stroke-width="0.6"/><circle cx="2" cy="6.5" r="1.6" fill="#c03030"/></svg>
<div class="t" style="left:288.7px;top:81.45px;letter-spacing:-0.12px;color:#111">Command_LRU/Measure_A/L001/Meas...</div>
<div class="c" style="left:442px;top:81.45px;color:#111;">99.3000</div>
<div style="left:476.5px;top:82.05px;width:23px;height:8px;background:#5c5cec;border:1px solid #26266a;border-radius:2.5px"></div>
<div class="t" style="left:483.5px;top:81.45px;color:#0c0c3a">def</div>
<div class="c" style="left:536.7px;top:81.45px;letter-spacing:-0.24px;color:#111;">10:08:45:142</div>
<div class="c" style="left:605px;top:81.45px;letter-spacing:-0.24px;color:#111;">DOUBLE</div>
<svg style="left:278px;top:92.1px" width="9" height="9"><rect x="0.5" y="0.5" width="8" height="8" rx="1.8" fill="#e9e9e9" stroke="#9a9a9a" stroke-width="0.8"/><rect x="0.9" y="0.9" width="7.2" height="2.2" rx="1" fill="#3a40a8"/><path d="M1.8 4.6l1.6 2.4M3.4 4.6l-1.6 2.4M4.3 6.6h0.6M5.6 4.6l1.6 2.4M7.2 4.6l-1.6 2.4" stroke="#8a8a8a" stroke-width="0.6"/><circle cx="2" cy="6.5" r="1.6" fill="#c03030"/></svg>
<div class="t" style="left:288.7px;top:92.0px;letter-spacing:-0.12px;color:#111">CODES/A_MotorControl/ReqPositionm</div>
<div class="c" style="left:442px;top:92.0px;color:#111;">100.0000</div>
<div style="left:476.5px;top:92.6px;width:23px;height:8px;background:#5c5cec;border:1px solid #26266a;border-radius:2.5px"></div>
<div class="t" style="left:483.5px;top:92.0px;color:#0c0c3a">def</div>
<div class="c" style="left:536.7px;top:92.0px;letter-spacing:-0.24px;color:#111;">10:08:45:146</div>
<div class="c" style="left:605px;top:92.0px;letter-spacing:-0.24px;color:#111;"></div>
<svg style="left:278px;top:102.65px" width="9" height="9"><rect x="0.5" y="0.5" width="8" height="8" rx="1.8" fill="#e9e9e9" stroke="#9a9a9a" stroke-width="0.8"/><rect x="0.9" y="0.9" width="7.2" height="2.2" rx="1" fill="#a8a8a8"/><path d="M1.8 4.6l1.6 2.4M3.4 4.6l-1.6 2.4M4.3 6.6h0.6M5.6 4.6l1.6 2.4M7.2 4.6l-1.6 2.4" stroke="#8a8a8a" stroke-width="0.6"/></svg>
<div class="t" style="left:288.7px;top:102.55000000000001px;color:#111">Alarms/Motor_A_Overspeed</div>
<div class="c" style="left:442px;top:102.55000000000001px;color:#111;">0</div>
<div style="left:476.5px;top:103.15px;width:23px;height:8px;background:#dcc032;border:1px solid #5a4a10;border-radius:2.5px"></div>
<div class="t" style="left:483px;top:102.55000000000001px;color:#2a2000">dec</div>
<div class="c" style="left:536.7px;top:102.55000000000001px;letter-spacing:-0.24px;color:#111;">10:03:24:875</div>
<div class="c" style="left:605px;top:102.55000000000001px;letter-spacing:-0.24px;color:#111;">INTEGER</div>
<svg style="left:278px;top:113.2px" width="9" height="9"><rect x="0.5" y="0.5" width="8" height="8" rx="1.8" fill="#e9e9e9" stroke="#9a9a9a" stroke-width="0.8"/><rect x="0.9" y="0.9" width="7.2" height="2.2" rx="1" fill="#a8a8a8"/><path d="M1.8 4.6l1.6 2.4M3.4 4.6l-1.6 2.4M4.3 6.6h0.6M5.6 4.6l1.6 2.4M7.2 4.6l-1.6 2.4" stroke="#8a8a8a" stroke-width="0.6"/></svg>
<div class="t" style="left:288.7px;top:113.10000000000001px;color:#111">Alarms/Motor_A_Speed_Warning</div>
<div class="c" style="left:442px;top:113.10000000000001px;color:#111;">1</div>
<div style="left:476.5px;top:113.7px;width:23px;height:8px;background:#dcc032;border:1px solid #5a4a10;border-radius:2.5px"></div>
<div class="t" style="left:483px;top:113.10000000000001px;color:#2a2000">dec</div>
<div class="c" style="left:536.7px;top:113.10000000000001px;letter-spacing:-0.24px;color:#111;">10:08:45:149</div>
<div class="c" style="left:605px;top:113.10000000000001px;letter-spacing:-0.24px;color:#111;">INTEGER</div>
<svg style="left:278px;top:123.75px" width="9" height="9"><rect x="0.5" y="0.5" width="8" height="8" rx="1.8" fill="#e9e9e9" stroke="#9a9a9a" stroke-width="0.8"/><rect x="0.9" y="0.9" width="7.2" height="2.2" rx="1" fill="#a8a8a8"/><path d="M1.8 4.6l1.6 2.4M3.4 4.6l-1.6 2.4M4.3 6.6h0.6M5.6 4.6l1.6 2.4M7.2 4.6l-1.6 2.4" stroke="#8a8a8a" stroke-width="0.6"/></svg>
<div class="t" style="left:288.7px;top:123.65px;color:#111">Alarms/Motor_B_Overspeed</div>
<div class="c" style="left:442px;top:123.65px;color:#111;">0</div>
<div style="left:476.5px;top:124.25px;width:23px;height:8px;background:#dcc032;border:1px solid #5a4a10;border-radius:2.5px"></div>
<div class="t" style="left:483px;top:123.65px;color:#2a2000">dec</div>
<div class="c" style="left:536.7px;top:123.65px;letter-spacing:-0.24px;color:#111;">10:03:24:875</div>
<div class="c" style="left:605px;top:123.65px;letter-spacing:-0.24px;color:#111;">INTEGER</div>
<svg style="left:278px;top:134.3px" width="9" height="9"><rect x="0.5" y="0.5" width="8" height="8" rx="1.8" fill="#e9e9e9" stroke="#9a9a9a" stroke-width="0.8"/><rect x="0.9" y="0.9" width="7.2" height="2.2" rx="1" fill="#a8a8a8"/><path d="M1.8 4.6l1.6 2.4M3.4 4.6l-1.6 2.4M4.3 6.6h0.6M5.6 4.6l1.6 2.4M7.2 4.6l-1.6 2.4" stroke="#8a8a8a" stroke-width="0.6"/></svg>
<div class="t" style="left:288.7px;top:134.20000000000002px;color:#111">Alarms/Motor_B_Speed_Warning</div>
<div class="c" style="left:442px;top:134.20000000000002px;color:#111;">0</div>
<div style="left:476.5px;top:134.8px;width:23px;height:8px;background:#dcc032;border:1px solid #5a4a10;border-radius:2.5px"></div>
<div class="t" style="left:483px;top:134.20000000000002px;color:#2a2000">dec</div>
<div class="c" style="left:536.7px;top:134.20000000000002px;letter-spacing:-0.24px;color:#111;">10:03:24:875</div>
<div class="c" style="left:605px;top:134.20000000000002px;letter-spacing:-0.24px;color:#111;">INTEGER</div>
<svg style="left:275px;top:195.5px" width="9" height="9"><circle cx="4.5" cy="4.5" r="4.3" fill="#30bcc4"/><path d="M2.3 2.3L6.7 6.7M2.8 5.5a1.2 1.2 0 1 0 0.1 0M6.2 3.5a1.2 1.2 0 1 0 0.1 0" stroke="#c8f0f2" stroke-width="0.8" fill="none"/></svg>
<div class="t" style="left:286px;top:195.4px;color:#333">Stats</div>
<svg style="left:302px;top:197px" width="6" height="6"><path d="M0.7 0.7L5.3 5.3M5.3 0.7L0.7 5.3" stroke="#cdcdcd" stroke-width="1.4"/></svg>
<svg style="left:581px;top:196px" width="9" height="8"><circle cx="3" cy="3.5" r="2.6" fill="#7ab060"/><circle cx="6.5" cy="5.5" r="2" fill="#4a7ac0"/></svg>
<svg style="left:594px;top:196px" width="9" height="9"><path d="M1 1L8 8" stroke="#3060c0" stroke-width="1.8"/><path d="M8 1L1 8" stroke="#d03030" stroke-width="1.8"/></svg>
<svg style="left:608px;top:196px" width="9" height="9"><path d="M0.5 0.5H7.5L5 4V8L3 7V4Z" fill="#888"/><circle cx="6.5" cy="6.5" r="2.2" fill="#3ab040"/></svg>
<div style="left:276px;top:211px;width:365px;height:130.5px;background:#fff;border:1px solid #a8a8a8"></div>
<div style="left:421px;top:212px;width:1px;height:129px;background:#ececec"></div>
<div style="left:450.5px;top:212px;width:1px;height:129px;background:#ececec"></div>
<div style="left:479px;top:212px;width:1px;height:129px;background:#ececec"></div>
<div style="left:502px;top:212px;width:1px;height:129px;background:#ececec"></div>
<div style="left:537px;top:212px;width:1px;height:129px;background:#ececec"></div>
<div style="left:560px;top:212px;width:1px;height:129px;background:#ececec"></div>
<div style="left:594.5px;top:212px;width:1px;height:129px;background:#ececec"></div>
<div style="left:629.5px;top:212px;width:1px;height:129px;background:#ececec"></div>
<div style="left:631px;top:212px;width:9px;height:129px;background:#fafafa"></div>
<div style="left:634.5px;top:222px;width:1.6px;height:79px;background:#8a8a8a;border-radius:1px"></div>
<div style="left:277px;top:225.5px;width:353px;height:1px;background:#e2e2e2"></div>
<div class="t" style="left:280px;top:214.15px;color:#222">Name</div>
<div class="t" style="left:426.75px;top:214.15px;color:#222">Enable</div>
<div class="t" style="left:458px;top:214.15px;color:#222">State</div>
<div class="t" style="left:483px;top:214.15px;letter-spacing:-0.12px;color:#222">Dur...</div>
<div class="t" style="left:506px;top:214.15px;letter-spacing:-0.14px;color:#222">Max Du...</div>
<div class="t" style="left:540.75px;top:214.15px;color:#222">Peri...</div>
<div class="t" style="left:564px;top:214.15px;letter-spacing:-0.14px;color:#222">Max Pe...</div>
<div class="t" style="left:600px;top:214.15px;color:#222">Overrun</div>
<div style="left:277px;top:236px;width:353px;height:1px;background:#f0f0f0"></div>
<div style="left:277px;top:246px;width:353px;height:1px;background:#f0f0f0"></div>
<div style="left:277px;top:256px;width:353px;height:1px;background:#f0f0f0"></div>
<div style="left:277px;top:266px;width:353px;height:1px;background:#f0f0f0"></div>
<div style="left:277px;top:276px;width:353px;height:1px;background:#f0f0f0"></div>
<div style="left:277px;top:286px;width:353px;height:1px;background:#f0f0f0"></div>
<div style="left:277px;top:296px;width:353px;height:1px;background:#f0f0f0"></div>
<div style="left:277px;top:306px;width:353px;height:1px;background:#f0f0f0"></div>
<div style="left:277px;top:316px;width:353px;height:1px;background:#f0f0f0"></div>
<div style="left:277px;top:326px;width:353px;height:1px;background:#f0f0f0"></div>
<div style="left:277px;top:336px;width:353px;height:1px;background:#f0f0f0"></div>
<div style="left:277px;top:346px;width:353px;height:1px;background:#f0f0f0"></div>
<div style="left:277px;top:246px;width:353px;height:9.5px;background:#d9d9d9"></div>
<div style="left:0;top:0;width:1024px;height:341px;overflow:hidden">
<svg style="left:280.75px;top:228.25px" width="4" height="5"><path d="M0.5 0.5L3 2.5L0.5 4.5" fill="none" stroke="#707070" stroke-width="0.85"/></svg>
<svg style="left:288.5px;top:226.25px" width="10" height="9"><circle cx="6" cy="4" r="3" fill="none" stroke="#8a8a8a" stroke-width="1.2" stroke-dasharray="1.2 0.8"/><circle cx="6" cy="4" r="1.2" fill="#8a8a8a"/><path d="M0 7h7" stroke="#8a8a8a" stroke-width="1"/></svg>
<div class="t" style="left:300.25px;top:226.15px;color:#111">Motor_B_Overspeed</div>
<svg style="left:452.9px;top:226.75px" width="8" height="8"><circle cx="4" cy="4" r="3.8" fill="#fdecec" stroke="#f2a8a8" stroke-width="0.7"/><circle cx="4" cy="4" r="2.7" fill="#e05050"/><path d="M3.2 2.7v2.6M4.8 2.7v2.6" stroke="#fff" stroke-width="0.8"/></svg>
<div class="t" style="left:464.25px;top:226.15px;letter-spacing:-0.35px;color:#111">IN...</div>
<div class="t" style="left:489.5px;top:226.15px;color:#111">0</div>
<div class="t" style="left:519px;top:226.15px;color:#111">0</div>
<svg style="left:280.75px;top:238.25px" width="4" height="5"><path d="M0.5 0.5L3 2.5L0.5 4.5" fill="none" stroke="#707070" stroke-width="0.85"/></svg>
<svg style="left:288.5px;top:236.25px" width="10" height="9"><circle cx="6" cy="4" r="3" fill="none" stroke="#8a8a8a" stroke-width="1.2" stroke-dasharray="1.2 0.8"/><circle cx="6" cy="4" r="1.2" fill="#8a8a8a"/><path d="M0 7h7" stroke="#8a8a8a" stroke-width="1"/></svg>
<div class="t" style="left:300.25px;top:236.15px;color:#111">Measure_async</div>
<svg style="left:452.9px;top:236.75px" width="8" height="8"><circle cx="4" cy="4" r="3.8" fill="#fdecec" stroke="#f2a8a8" stroke-width="0.7"/><circle cx="4" cy="4" r="2.7" fill="#e05050"/><path d="M3.2 2.7v2.6M4.8 2.7v2.6" stroke="#fff" stroke-width="0.8"/></svg>
<div class="t" style="left:464.25px;top:236.15px;letter-spacing:-0.35px;color:#111">IN...</div>
<div class="t" style="left:489.5px;top:236.15px;color:#111">0</div>
<div class="t" style="left:519px;top:236.15px;color:#111">0</div>
<svg style="left:279.75px;top:249.25px" width="5" height="4"><path d="M0.5 0.5L2.5 3L4.5 0.5" fill="none" stroke="#3a3a3a" stroke-width="0.95"/></svg>
<svg style="left:288.5px;top:246.25px" width="10" height="9"><circle cx="6" cy="4" r="3" fill="none" stroke="#8a8a8a" stroke-width="1.2" stroke-dasharray="1.2 0.8"/><circle cx="6" cy="4" r="1.2" fill="#8a8a8a"/><path d="M0 7h7" stroke="#8a8a8a" stroke-width="1"/></svg>
<div class="t" style="left:300.25px;top:246.15px;color:#111">Command</div>
<svg style="left:452.9px;top:246.75px" width="8" height="8"><circle cx="4" cy="4" r="3.8" fill="#fdecec" stroke="#f2a8a8" stroke-width="0.7"/><circle cx="4" cy="4" r="2.7" fill="#e05050"/><path d="M3.2 2.7v2.6M4.8 2.7v2.6" stroke="#fff" stroke-width="0.8"/></svg>
<div class="t" style="left:464.25px;top:246.15px;letter-spacing:-0.35px;color:#111">IN...</div>
<div class="t" style="left:489.5px;top:246.15px;color:#111">0</div>
<div class="t" style="left:519px;top:246.15px;color:#111">0</div>
<svg style="left:298px;top:256.75px" width="9" height="8"><circle cx="3" cy="3.5" r="2.7" fill="#6ab050"/><circle cx="6.8" cy="5.5" r="1.8" fill="#4a6ab0"/></svg>
<div class="t" style="left:309px;top:256.15px;letter-spacing:-0.35px;color:#111">1:CHAIN_DECODE</div>
<svg style="left:298px;top:266.75px" width="9" height="8"><circle cx="3" cy="3.5" r="2.7" fill="#6ab050"/><circle cx="6.8" cy="5.5" r="1.8" fill="#4a6ab0"/></svg>
<div class="t" style="left:309px;top:266.15px;letter-spacing:-0.35px;color:#111">0:CHAIN_ENCODE</div>
<svg style="left:280.75px;top:278.25px" width="4" height="5"><path d="M0.5 0.5L3 2.5L0.5 4.5" fill="none" stroke="#707070" stroke-width="0.85"/></svg>
<svg style="left:288.5px;top:276.25px" width="10" height="9"><circle cx="6" cy="4" r="3" fill="none" stroke="#8a8a8a" stroke-width="1.2" stroke-dasharray="1.2 0.8"/><circle cx="6" cy="4" r="1.2" fill="#8a8a8a"/><path d="M0 7h7" stroke="#8a8a8a" stroke-width="1"/></svg>
<div class="t" style="left:300.25px;top:276.15px;color:#111">Motor_B_Speed_Warning</div>
<svg style="left:452.9px;top:276.75px" width="8" height="8"><circle cx="4" cy="4" r="3.8" fill="#fdecec" stroke="#f2a8a8" stroke-width="0.7"/><circle cx="4" cy="4" r="2.7" fill="#e05050"/><path d="M3.2 2.7v2.6M4.8 2.7v2.6" stroke="#fff" stroke-width="0.8"/></svg>
<div class="t" style="left:464.25px;top:276.15px;letter-spacing:-0.35px;color:#111">IN...</div>
<div class="t" style="left:489.5px;top:276.15px;color:#111">0</div>
<div class="t" style="left:519px;top:276.15px;color:#111">0</div>
<svg style="left:280.75px;top:288.25px" width="4" height="5"><path d="M0.5 0.5L3 2.5L0.5 4.5" fill="none" stroke="#707070" stroke-width="0.85"/></svg>
<svg style="left:288.5px;top:286.25px" width="10" height="9"><circle cx="6" cy="4" r="3" fill="none" stroke="#8a8a8a" stroke-width="1.2" stroke-dasharray="1.2 0.8"/><circle cx="6" cy="4" r="1.2" fill="#8a8a8a"/><path d="M0 7h7" stroke="#8a8a8a" stroke-width="1"/></svg>
<div class="t" style="left:300.25px;top:286.15px;letter-spacing:-0.35px;color:#111">MOTOR_A</div>
<svg style="left:452.9px;top:286.75px" width="8" height="8"><circle cx="4" cy="4" r="3.8" fill="#fdecec" stroke="#f2a8a8" stroke-width="0.7"/><circle cx="4" cy="4" r="2.7" fill="#e05050"/><path d="M3.2 2.7v2.6M4.8 2.7v2.6" stroke="#fff" stroke-width="0.8"/></svg>
<div class="t" style="left:464.25px;top:286.15px;letter-spacing:-0.35px;color:#111">IN...</div>
<div class="t" style="left:489.5px;top:286.15px;color:#111">0</div>
<div class="t" style="left:519px;top:286.15px;color:#111">0</div>
<svg style="left:279.75px;top:299.25px" width="5" height="4"><path d="M0.5 0.5L2.5 3L4.5 0.5" fill="none" stroke="#3a3a3a" stroke-width="0.95"/></svg>
<svg style="left:288.5px;top:296.25px" width="10" height="9"><circle cx="6" cy="4" r="3" fill="none" stroke="#8a8a8a" stroke-width="1.2" stroke-dasharray="1.2 0.8"/><circle cx="6" cy="4" r="1.2" fill="#8a8a8a"/><path d="M0 7h7" stroke="#8a8a8a" stroke-width="1"/></svg>
<div class="t" style="left:300.25px;top:296.15px;letter-spacing:-0.12px;color:#111">Group B</div>
<svg style="left:452.9px;top:296.75px" width="8" height="8"><circle cx="4" cy="4" r="3.8" fill="#fdecec" stroke="#f2a8a8" stroke-width="0.7"/><circle cx="4" cy="4" r="2.7" fill="#e05050"/><path d="M3.2 2.7v2.6M4.8 2.7v2.6" stroke="#fff" stroke-width="0.8"/></svg>
<div class="t" style="left:464.25px;top:296.15px;letter-spacing:-0.35px;color:#111">IN...</div>
<div class="t" style="left:489.5px;top:296.15px;color:#111">0</div>
<div class="t" style="left:519px;top:296.15px;color:#111">0</div>
<svg style="left:298px;top:306.75px" width="9" height="8"><circle cx="3" cy="3.5" r="2.7" fill="#6ab050"/><circle cx="6.8" cy="5.5" r="1.8" fill="#4a6ab0"/></svg>
<div class="t" style="left:309px;top:306.15px;letter-spacing:-0.35px;color:#111">1:USERCODE_STEP</div>
<svg style="left:298px;top:316.75px" width="9" height="8"><circle cx="3" cy="3.5" r="2.7" fill="#6ab050"/><circle cx="6.8" cy="5.5" r="1.8" fill="#4a6ab0"/></svg>
<div class="t" style="left:309px;top:316.15px;letter-spacing:-0.35px;color:#111">0:USERCODE_STEP</div>
<svg style="left:280.75px;top:328.25px" width="4" height="5"><path d="M0.5 0.5L3 2.5L0.5 4.5" fill="none" stroke="#707070" stroke-width="0.85"/></svg>
<svg style="left:288.5px;top:326.25px" width="10" height="9"><circle cx="6" cy="4" r="3" fill="none" stroke="#8a8a8a" stroke-width="1.2" stroke-dasharray="1.2 0.8"/><circle cx="6" cy="4" r="1.2" fill="#8a8a8a"/><path d="M0 7h7" stroke="#8a8a8a" stroke-width="1"/></svg>
<div class="t" style="left:300.25px;top:326.15px;color:#111">Motor_A_Overspeed</div>
<svg style="left:452.9px;top:326.75px" width="8" height="8"><circle cx="4" cy="4" r="3.8" fill="#fdecec" stroke="#f2a8a8" stroke-width="0.7"/><circle cx="4" cy="4" r="2.7" fill="#e05050"/><path d="M3.2 2.7v2.6M4.8 2.7v2.6" stroke="#fff" stroke-width="0.8"/></svg>
<div class="t" style="left:464.25px;top:326.15px;letter-spacing:-0.35px;color:#111">IN...</div>
<div class="t" style="left:489.5px;top:326.15px;color:#111">0</div>
<div class="t" style="left:519px;top:326.15px;color:#111">0</div>
<svg style="left:280.75px;top:338.25px" width="4" height="5"><path d="M0.5 0.5L3 2.5L0.5 4.5" fill="none" stroke="#707070" stroke-width="0.85"/></svg>
<svg style="left:288.5px;top:336.25px" width="10" height="9"><circle cx="6" cy="4" r="3" fill="none" stroke="#8a8a8a" stroke-width="1.2" stroke-dasharray="1.2 0.8"/><circle cx="6" cy="4" r="1.2" fill="#8a8a8a"/><path d="M0 7h7" stroke="#8a8a8a" stroke-width="1"/></svg>
<div class="t" style="left:300.25px;top:336.15px;color:#111">Measure_A</div>
<svg style="left:452.9px;top:336.75px" width="8" height="8"><circle cx="4" cy="4" r="3.8" fill="#fdecec" stroke="#f2a8a8" stroke-width="0.7"/><circle cx="4" cy="4" r="2.7" fill="#e05050"/><path d="M3.2 2.7v2.6M4.8 2.7v2.6" stroke="#fff" stroke-width="0.8"/></svg>
<div class="t" style="left:464.25px;top:336.15px;letter-spacing:-0.35px;color:#111">IN...</div>
<div class="t" style="left:489.5px;top:336.15px;color:#111">0</div>
<div class="t" style="left:519px;top:336.15px;color:#111">0</div>
</div>
<svg style="left:653px;top:41px" width="10" height="9"><rect x="0" y="0" width="9" height="8" rx="1" fill="#e0e0e0" stroke="#999" stroke-width="0.6"/><path d="M1 6Q4 1 8 3" stroke="#d03020" stroke-width="2" fill="none"/><circle cx="5" cy="5" r="2" fill="#f0c020"/></svg>
<div class="t" style="left:664.5px;top:40.4px;color:#333">Synoptics</div>
<svg style="left:695px;top:42px" width="6" height="6"><path d="M0.7 0.7L5.3 5.3M5.3 0.7L0.7 5.3" stroke="#cdcdcd" stroke-width="1.4"/></svg>
<div style="left:652px;top:55px;width:367px;height:13px;background:#fff;border:1px solid #c0c0c0;border-radius:1px"></div>
<div class="t" style="left:655.5px;top:56.9px;font-size:7px;letter-spacing:-0.15px;color:#222;transform:none">/Demo_MotorControl_Synoptics_black/Displays/Main.opi</div>
<svg style="left:1012px;top:60px" width="5" height="3"><path d="M0.5 0.5L2.5 2.5L4.5 0.5" fill="none" stroke="#555" stroke-width="0.8"/></svg>
<div style="left:652.5px;top:70.5px;width:368px;height:275px;background:#f0f0f0"></div>
<svg style="left:0;top:0" width="1024" height="511"><defs><linearGradient id="gbg" x1="0" y1="0" x2="0" y2="1"><stop offset="0" stop-color="#1f1c22"/><stop offset="1" stop-color="#0d0c0e"/></linearGradient><radialGradient id="face" cx="0.5" cy="0.35" r="0.7"><stop offset="0" stop-color="#6a7276"/><stop offset="0.6" stop-color="#4a5256"/><stop offset="1" stop-color="#2e3438"/></radialGradient><radialGradient id="hub" cx="0.4" cy="0.35" r="0.7"><stop offset="0" stop-color="#ffffff"/><stop offset="1" stop-color="#909090"/></radialGradient><radialGradient id="ball" cx="0.35" cy="0.3" r="0.75"><stop offset="0" stop-color="#8a8a8a"/><stop offset="0.5" stop-color="#3a3a3a"/><stop offset="1" stop-color="#0a0a0a"/></radialGradient><linearGradient id="abl" x1="0" y1="0" x2="0" y2="1"><stop offset="0" stop-color="#f4f8ff"/><stop offset="1" stop-color="#9cc8f4"/></linearGradient><linearGradient id="ared" x1="0" y1="0" x2="0" y2="1"><stop offset="0" stop-color="#fff0f0"/><stop offset="0.55" stop-color="#ff3030"/><stop offset="1" stop-color="#f00000"/></linearGradient><linearGradient id="tarc" x1="0" y1="0" x2="1" y2="0"><stop offset="0" stop-color="#20e020"/><stop offset="0.45" stop-color="#80f020"/><stop offset="0.7" stop-color="#f0e020"/><stop offset="1" stop-color="#ff1010"/></linearGradient></defs><rect x="652.5" y="70.5" width="356.5" height="262" fill="url(#gbg)"/><rect x="652.5" y="70.5" width="8" height="150" fill="#3a3541"/><rect x="660.3" y="70.8" width="348.7" height="149.2" fill="#000"/><line x1="685" y1="72.60" x2="1009" y2="72.60" stroke="#5c5c5c" stroke-width="1.1" stroke-dasharray="5 3.5"/><line x1="685" y1="101.77" x2="1009" y2="101.77" stroke="#5c5c5c" stroke-width="1.1" stroke-dasharray="5 3.5"/><line x1="685" y1="130.95" x2="1009" y2="130.95" stroke="#5c5c5c" stroke-width="1.1" stroke-dasharray="5 3.5"/><line x1="685" y1="160.12" x2="1009" y2="160.12" stroke="#5c5c5c" stroke-width="1.1" stroke-dasharray="5 3.5"/><line x1="685" y1="189.30" x2="1009" y2="189.30" stroke="#5c5c5c" stroke-width="1.1" stroke-dasharray="5 3.5"/><line x1="705.3" y1="71" x2="705.3" y2="200" stroke="#5c5c5c" stroke-width="1.1" stroke-dasharray="5 3.5"/><line x1="763.5" y1="71" x2="763.5" y2="200" stroke="#5c5c5c" stroke-width="1.1" stroke-dasharray="5 3.5"/><line x1="821.7" y1="71" x2="821.7" y2="200" stroke="#5c5c5c" stroke-width="1.1" stroke-dasharray="5 3.5"/><line x1="879.8" y1="71" x2="879.8" y2="200" stroke="#5c5c5c" stroke-width="1.1" stroke-dasharray="5 3.5"/><line x1="938" y1="71" x2="938" y2="200" stroke="#5c5c5c" stroke-width="1.1" stroke-dasharray="5 3.5"/><line x1="996.2" y1="71" x2="996.2" y2="200" stroke="#5c5c5c" stroke-width="1.1" stroke-dasharray="5 3.5"/><line x1="684.4" y1="71.5" x2="684.4" y2="201" stroke="#00c000" stroke-width="1"/><line x1="684" y1="200.5" x2="1009" y2="200.5" stroke="#00c000" stroke-width="1"/><line x1="682.4" y1="200.97" x2="684.4" y2="200.97" stroke="#00c000" stroke-width="0.8"/><line x1="682.4" y1="195.13" x2="684.4" y2="195.13" stroke="#00c000" stroke-width="0.8"/><line x1="681.4" y1="189.30" x2="684.4" y2="189.30" stroke="#00c000" stroke-width="0.8"/><line x1="682.4" y1="183.47" x2="684.4" y2="183.47" stroke="#00c000" stroke-width="0.8"/><line x1="682.4" y1="177.63" x2="684.4" y2="177.63" stroke="#00c000" stroke-width="0.8"/><line x1="682.4" y1="171.80" x2="684.4" y2="171.80" stroke="#00c000" stroke-width="0.8"/><line x1="682.4" y1="165.96" x2="684.4" y2="165.96" stroke="#00c000" stroke-width="0.8"/><line x1="681.4" y1="160.12" x2="684.4" y2="160.12" stroke="#00c000" stroke-width="0.8"/><line x1="682.4" y1="154.29" x2="684.4" y2="154.29" stroke="#00c000" stroke-width="0.8"/><line x1="682.4" y1="148.45" x2="684.4" y2="148.45" stroke="#00c000" stroke-width="0.8"/><line x1="682.4" y1="142.62" x2="684.4" y2="142.62" stroke="#00c000" stroke-width="0.8"/><line x1="682.4" y1="136.78" x2="684.4" y2="136.78" stroke="#00c000" stroke-width="0.8"/><line x1="681.4" y1="130.95" x2="684.4" y2="130.95" stroke="#00c000" stroke-width="0.8"/><line x1="682.4" y1="125.11" x2="684.4" y2="125.11" stroke="#00c000" stroke-width="0.8"/><line x1="682.4" y1="119.28" x2="684.4" y2="119.28" stroke="#00c000" stroke-width="0.8"/><line x1="682.4" y1="113.44" x2="684.4" y2="113.44" stroke="#00c000" stroke-width="0.8"/><line x1="682.4" y1="107.61" x2="684.4" y2="107.61" stroke="#00c000" stroke-width="0.8"/><line x1="681.4" y1="101.77" x2="684.4" y2="101.77" stroke="#00c000" stroke-width="0.8"/><line x1="682.4" y1="95.94" x2="684.4" y2="95.94" stroke="#00c000" stroke-width="0.8"/><line x1="682.4" y1="90.10" x2="684.4" y2="90.10" stroke="#00c000" stroke-width="0.8"/><line x1="682.4" y1="84.27" x2="684.4" y2="84.27" stroke="#00c000" stroke-width="0.8"/><line x1="682.4" y1="78.43" x2="684.4" y2="78.43" stroke="#00c000" stroke-width="0.8"/><line x1="681.4" y1="72.60" x2="684.4" y2="72.60" stroke="#00c000" stroke-width="0.8"/><line x1="693.67" y1="200.5" x2="693.67" y2="203" stroke="#00c000" stroke-width="0.8"/><line x1="705.30" y1="200.5" x2="705.30" y2="203" stroke="#00c000" stroke-width="0.8"/><line x1="716.93" y1="200.5" x2="716.93" y2="203" stroke="#00c000" stroke-width="0.8"/><line x1="728.56" y1="200.5" x2="728.56" y2="203" stroke="#00c000" stroke-width="0.8"/><line x1="740.19" y1="200.5" x2="740.19" y2="203" stroke="#00c000" stroke-width="0.8"/><line x1="751.82" y1="200.5" x2="751.82" y2="203" stroke="#00c000" stroke-width="0.8"/><line x1="763.45" y1="200.5" x2="763.45" y2="203" stroke="#00c000" stroke-width="0.8"/><line x1="775.08" y1="200.5" x2="775.08" y2="203" stroke="#00c000" stroke-width="0.8"/><line x1="786.71" y1="200.5" x2="786.71" y2="203" stroke="#00c000" stroke-width="0.8"/><line x1="798.34" y1="200.5" x2="798.34" y2="203" stroke="#00c000" stroke-width="0.8"/><line x1="809.97" y1="200.5" x2="809.97" y2="203" stroke="#00c000" stroke-width="0.8"/><line x1="821.60" y1="200.5" x2="821.60" y2="203" stroke="#00c000" stroke-width="0.8"/><line x1="833.23" y1="200.5" x2="833.23" y2="203" stroke="#00c000" stroke-width="0.8"/><line x1="844.86" y1="200.5" x2="844.86" y2="203" stroke="#00c000" stroke-width="0.8"/><line x1="856.49" y1="200.5" x2="856.49" y2="203" stroke="#00c000" stroke-width="0.8"/><line x1="868.12" y1="200.5" x2="868.12" y2="203" stroke="#00c000" stroke-width="0.8"/><line x1="879.75" y1="200.5" x2="879.75" y2="203" stroke="#00c000" stroke-width="0.8"/><line x1="891.38" y1="200.5" x2="891.38" y2="203" stroke="#00c000" stroke-width="0.8"/><line x1="903.01" y1="200.5" x2="903.01" y2="203" stroke="#00c000" stroke-width="0.8"/><line x1="914.64" y1="200.5" x2="914.64" y2="203" stroke="#00c000" stroke-width="0.8"/><line x1="926.27" y1="200.5" x2="926.27" y2="203" stroke="#00c000" stroke-width="0.8"/><line x1="937.90" y1="200.5" x2="937.90" y2="203" stroke="#00c000" stroke-width="0.8"/><line x1="949.53" y1="200.5" x2="949.53" y2="203" stroke="#00c000" stroke-width="0.8"/><line x1="961.16" y1="200.5" x2="961.16" y2="203" stroke="#00c000" stroke-width="0.8"/><line x1="972.79" y1="200.5" x2="972.79" y2="203" stroke="#00c000" stroke-width="0.8"/><line x1="984.42" y1="200.5" x2="984.42" y2="203" stroke="#00c000" stroke-width="0.8"/><line x1="996.05" y1="200.5" x2="996.05" y2="203" stroke="#00c000" stroke-width="0.8"/><line x1="1007.68" y1="200.5" x2="1007.68" y2="203" stroke="#00c000" stroke-width="0.8"/><line x1="705.3" y1="200.5" x2="705.3" y2="204" stroke="#00c000" stroke-width="0.8"/><line x1="763.5" y1="200.5" x2="763.5" y2="204" stroke="#00c000" stroke-width="0.8"/><line x1="821.7" y1="200.5" x2="821.7" y2="204" stroke="#00c000" stroke-width="0.8"/><line x1="879.8" y1="200.5" x2="879.8" y2="204" stroke="#00c000" stroke-width="0.8"/><line x1="938" y1="200.5" x2="938" y2="204" stroke="#00c000" stroke-width="0.8"/><line x1="996.2" y1="200.5" x2="996.2" y2="204" stroke="#00c000" stroke-width="0.8"/><text x="681.7" y="74.90" fill="#00c000" font-size="6.6" text-anchor="end" font-family="Liberation Sans">200</text><text x="681.7" y="104.07" fill="#00c000" font-size="6.6" text-anchor="end" font-family="Liberation Sans">150</text><text x="681.7" y="133.25" fill="#00c000" font-size="6.6" text-anchor="end" font-family="Liberation Sans">100</text><text x="678.3" y="162.43" fill="#00c000" font-size="6.6" text-anchor="end" font-family="Liberation Sans">50</text><text x="675" y="191.60" fill="#00c000" font-size="6.6" text-anchor="end" font-family="Liberation Sans">0</text><text x="677.6" y="203.27" fill="#00c000" font-size="6.6" text-anchor="end" font-family="Liberation Sans">-20</text><text x="685.4" y="210.6" fill="#00c000" font-size="6.4" text-anchor="middle" font-family="Liberation Sans">19:25:52</text><text x="763.5" y="210.6" fill="#00c000" font-size="6.4" text-anchor="middle" font-family="Liberation Sans">19:26:20</text><text x="821.7" y="210.6" fill="#00c000" font-size="6.4" text-anchor="middle" font-family="Liberation Sans">19:26:40</text><text x="879.8" y="210.6" fill="#00c000" font-size="6.4" text-anchor="middle" font-family="Liberation Sans">19:27:00</text><text x="938" y="210.6" fill="#00c000" font-size="6.4" text-anchor="middle" font-family="Liberation Sans">19:27:20</text><text x="996.2" y="210.6" fill="#00c000" font-size="6.4" text-anchor="middle" font-family="Liberation Sans">19:27:40</text><text x="915" y="218.8" fill="#00c000" font-size="6.6" font-weight="bold" text-anchor="middle" font-family="Liberation Sans">Time</text><text transform="translate(666,135) rotate(-90)" fill="#00c000" font-size="6.6" font-weight="bold" text-anchor="middle" font-family="Liberation Sans">Position</text><path d="M685.0 160.9 L687.5 159.2 L690.0 161.1 L692.5 158.6 L695.0 160.6 L697.5 158.6 L700.0 161.0 L702.5 158.6 L705.0 161.2 L707.5 159.1 L710.0 160.1 L712.5 158.8 L715.0 160.7 L717.5 159.3 L720.0 161.2 L722.5 158.9 L725.0 160.7 L727.5 158.7 L730.0 161.0 L732.5 159.1 L735.0 160.9 L737.5 159.2 L740.0 161.2 L742.5 159.4 L745.0 160.9 L747.5 158.6 L750.0 161.4 L752.5 157.5 L755.0 161.4 L757.5 159.4 L760.0 161.3 L762.5 159.1 L765.0 161.4 L767.5 159.0 L770.0 160.7 L772.5 159.1 L775.0 161.4 L777.5 158.9 L780.0 160.6 L782.5 158.7 L784.5 158.7 L784.5 153.5 L785.0 154.2 L787.5 152.1 L790.0 154.5 L792.5 152.1 L795.0 154.6 L797.5 152.8 L800.0 154.4 L802.5 152.4 L805.0 155.1 L807.5 152.2 L810.0 154.3 L812.5 154.3 L812.5 130.9 L812.5 130.0 L815.0 131.5 L817.5 129.8 L820.0 132.5 L822.5 129.9 L825.0 132.2 L827.5 130.3 L830.0 132.4 L832.5 129.8 L835.0 131.6 L837.5 129.5 L840.0 131.7 L842.5 129.7 L845.0 131.5 L847.5 129.5 L850.0 131.5 L852.5 130.0 L855.0 131.8 L857.5 129.8 L860.0 132.3 L862.5 129.9 L865.0 131.6 L867.5 129.7 L870.0 132.3 L872.5 129.4 L875.0 132.0 L877.5 131.4 L880.0 132.5 L882.5 130.1 L885.0 131.9 L887.5 130.2 L890.0 132.3 L892.5 129.6 L895.0 132.5 L897.5 130.2 L900.0 132.2 L902.5 129.9 L905.0 133.0 L907.5 129.9 L910.0 132.1 L912.5 130.2 L915.0 131.8 L917.5 129.5 L920.0 132.0 L922.5 129.9 L925.0 133.6 L927.5 130.2 L930.0 132.2 L932.5 130.2 L935.0 132.0 L937.5 130.2 L940.0 132.3 L942.5 129.8 L945.0 132.4 L947.5 129.6 L950.0 131.7 L952.5 130.2 L955.0 132.3 L957.5 130.1 L960.0 132.0 L962.5 129.4 L965.0 132.1 L967.5 130.3 L970.0 132.4 L972.5 129.6 L975.0 131.8 L977.5 130.0 L980.0 131.9 L982.5 130.3 L985.0 132.0 L987.5 130.3 L990.0 132.4 L992.5 129.9 L995.0 131.5 L997.5 128.1 L1000.0 131.7 L1002.5 130.1 L1005.0 131.8 L1007.5 130.0" fill="none" stroke="#f08a1e" stroke-width="1.3"/><rect x="663" y="241" width="83" height="71" fill="#1b191d"/><circle cx="699.1" cy="277.4" r="35.7" fill="url(#face)" stroke="#dcdcdc" stroke-width="1.1"/><circle cx="699.1" cy="277.4" r="28.56" fill="#525a5e" opacity="0.45"/><line x1="674.78" y1="301.72" x2="677.39" y2="299.11" stroke="#f4f4f4" stroke-width="1.3"/><line x1="671.27" y1="297.62" x2="672.65" y2="296.62" stroke="#f4f4f4" stroke-width="0.7"/><line x1="668.45" y1="293.02" x2="669.96" y2="292.25" stroke="#f4f4f4" stroke-width="0.7"/><line x1="666.38" y1="288.03" x2="668.00" y2="287.50" stroke="#f4f4f4" stroke-width="0.7"/><line x1="665.12" y1="282.78" x2="666.80" y2="282.52" stroke="#f4f4f4" stroke-width="0.7"/><line x1="664.70" y1="277.40" x2="668.40" y2="277.40" stroke="#f4f4f4" stroke-width="1.3"/><line x1="665.12" y1="272.02" x2="666.80" y2="272.28" stroke="#f4f4f4" stroke-width="0.7"/><line x1="666.38" y1="266.77" x2="668.00" y2="267.30" stroke="#f4f4f4" stroke-width="0.7"/><line x1="668.45" y1="261.78" x2="669.96" y2="262.55" stroke="#f4f4f4" stroke-width="0.7"/><line x1="671.27" y1="257.18" x2="672.65" y2="258.18" stroke="#f4f4f4" stroke-width="0.7"/><line x1="674.78" y1="253.08" x2="677.39" y2="255.69" stroke="#f4f4f4" stroke-width="1.3"/><line x1="678.88" y1="249.57" x2="679.88" y2="250.95" stroke="#f4f4f4" stroke-width="0.7"/><line x1="683.48" y1="246.75" x2="684.25" y2="248.26" stroke="#f4f4f4" stroke-width="0.7"/><line x1="688.47" y1="244.68" x2="689.00" y2="246.30" stroke="#f4f4f4" stroke-width="0.7"/><line x1="693.72" y1="243.42" x2="693.98" y2="245.10" stroke="#f4f4f4" stroke-width="0.7"/><line x1="699.10" y1="243.00" x2="699.10" y2="246.70" stroke="#f4f4f4" stroke-width="1.3"/><line x1="704.48" y1="243.42" x2="704.22" y2="245.10" stroke="#f4f4f4" stroke-width="0.7"/><line x1="709.73" y1="244.68" x2="709.20" y2="246.30" stroke="#f4f4f4" stroke-width="0.7"/><line x1="714.72" y1="246.75" x2="713.95" y2="248.26" stroke="#f4f4f4" stroke-width="0.7"/><line x1="719.32" y1="249.57" x2="718.32" y2="250.95" stroke="#f4f4f4" stroke-width="0.7"/><line x1="723.42" y1="253.08" x2="720.81" y2="255.69" stroke="#f4f4f4" stroke-width="1.3"/><line x1="726.93" y1="257.18" x2="725.55" y2="258.18" stroke="#f4f4f4" stroke-width="0.7"/><line x1="729.75" y1="261.78" x2="728.24" y2="262.55" stroke="#f4f4f4" stroke-width="0.7"/><line x1="731.82" y1="266.77" x2="730.20" y2="267.30" stroke="#f4f4f4" stroke-width="0.7"/><line x1="733.08" y1="272.02" x2="731.40" y2="272.28" stroke="#f4f4f4" stroke-width="0.7"/><line x1="733.50" y1="277.40" x2="729.80" y2="277.40" stroke="#f4f4f4" stroke-width="1.3"/><line x1="733.08" y1="282.78" x2="731.40" y2="282.52" stroke="#f4f4f4" stroke-width="0.7"/><line x1="731.82" y1="288.03" x2="730.20" y2="287.50" stroke="#f4f4f4" stroke-width="0.7"/><line x1="729.75" y1="293.02" x2="728.24" y2="292.25" stroke="#f4f4f4" stroke-width="0.7"/><line x1="726.93" y1="297.62" x2="725.55" y2="296.62" stroke="#f4f4f4" stroke-width="0.7"/><line x1="723.42" y1="301.72" x2="720.81" y2="299.11" stroke="#f4f4f4" stroke-width="1.3"/><path d="M688.59 289.07 A15.71 15.71 0 1 1 709.61 289.07" fill="none" stroke="url(#tarc)" stroke-width="4.28"/><text x="681.43" y="297.27" fill="#ececec" font-size="6.07" text-anchor="middle" font-family="Liberation Sans" letter-spacing="-0.2">0</text><text x="674.11" y="279.60" fill="#ececec" font-size="6.07" text-anchor="middle" font-family="Liberation Sans" letter-spacing="-0.2">500</text><text x="681.43" y="261.93" fill="#ececec" font-size="6.07" text-anchor="middle" font-family="Liberation Sans" letter-spacing="-0.2">1000</text><text x="699.10" y="254.61" fill="#ececec" font-size="6.07" text-anchor="middle" font-family="Liberation Sans" letter-spacing="-0.2">1500</text><text x="716.77" y="261.93" fill="#ececec" font-size="6.07" text-anchor="middle" font-family="Liberation Sans" letter-spacing="-0.2">2000</text><text x="724.09" y="279.60" fill="#ececec" font-size="6.07" text-anchor="middle" font-family="Liberation Sans" letter-spacing="-0.2">2500</text><text x="716.77" y="297.27" fill="#ececec" font-size="6.07" text-anchor="middle" font-family="Liberation Sans" letter-spacing="-0.2">3000</text><ellipse cx="699.1" cy="304.17" rx="16.07" ry="5.36" fill="#667074" opacity="0.45"/><text x="699.1" y="307.17" fill="#f8f8f8" font-size="8.03" font-weight="bold" text-anchor="middle" font-family="Liberation Sans">1500</text><path d="M700.80 277.40 L699.10 244.56 L697.40 277.40Z" fill="#ff2222"/><circle cx="699.1" cy="277.4" r="3.57" fill="url(#hub)"/><text x="699.1" y="324.90" fill="#18f018" font-size="6.6" font-weight="bold" text-anchor="middle" font-family="Liberation Sans" letter-spacing="-0.2">Temperature</text><rect x="663.2" y="231.2" width="82.8" height="9.8" fill="#ff00ff"/><text x="665" y="238.6" fill="#fff0ff" font-size="6.8" font-weight="bold" letter-spacing="-0.2" font-family="Liberation Sans">Disconnected</text><circle cx="813.25" cy="271.8" r="40.2" fill="url(#face)" stroke="#dcdcdc" stroke-width="1.1"/><circle cx="813.25" cy="271.8" r="32.16" fill="#525a5e" opacity="0.45"/><line x1="785.74" y1="299.31" x2="788.36" y2="296.69" stroke="#f4f4f4" stroke-width="1.3"/><line x1="783.28" y1="296.60" x2="784.59" y2="295.51" stroke="#f4f4f4" stroke-width="0.7"/><line x1="781.08" y1="293.67" x2="782.48" y2="292.71" stroke="#f4f4f4" stroke-width="0.7"/><line x1="779.16" y1="290.54" x2="780.65" y2="289.72" stroke="#f4f4f4" stroke-width="0.7"/><line x1="777.55" y1="287.25" x2="779.11" y2="286.57" stroke="#f4f4f4" stroke-width="0.7"/><line x1="776.25" y1="283.82" x2="779.77" y2="282.68" stroke="#f4f4f4" stroke-width="1.3"/><line x1="775.29" y1="280.29" x2="776.95" y2="279.91" stroke="#f4f4f4" stroke-width="0.7"/><line x1="774.66" y1="276.68" x2="776.34" y2="276.46" stroke="#f4f4f4" stroke-width="0.7"/><line x1="774.37" y1="273.02" x2="776.07" y2="272.97" stroke="#f4f4f4" stroke-width="0.7"/><line x1="774.43" y1="269.36" x2="776.12" y2="269.46" stroke="#f4f4f4" stroke-width="0.7"/><line x1="774.83" y1="265.71" x2="778.48" y2="266.29" stroke="#f4f4f4" stroke-width="1.3"/><line x1="775.57" y1="262.13" x2="777.22" y2="262.55" stroke="#f4f4f4" stroke-width="0.7"/><line x1="776.65" y1="258.62" x2="778.25" y2="259.20" stroke="#f4f4f4" stroke-width="0.7"/><line x1="778.05" y1="255.24" x2="779.59" y2="255.96" stroke="#f4f4f4" stroke-width="0.7"/><line x1="779.77" y1="252.00" x2="781.23" y2="252.86" stroke="#f4f4f4" stroke-width="0.7"/><line x1="781.78" y1="248.94" x2="784.77" y2="251.11" stroke="#f4f4f4" stroke-width="1.3"/><line x1="784.07" y1="246.07" x2="785.35" y2="247.20" stroke="#f4f4f4" stroke-width="0.7"/><line x1="786.62" y1="243.44" x2="787.78" y2="244.68" stroke="#f4f4f4" stroke-width="0.7"/><line x1="789.41" y1="241.06" x2="790.45" y2="242.41" stroke="#f4f4f4" stroke-width="0.7"/><line x1="792.41" y1="238.96" x2="793.32" y2="240.39" stroke="#f4f4f4" stroke-width="0.7"/><line x1="795.59" y1="237.14" x2="797.27" y2="240.44" stroke="#f4f4f4" stroke-width="1.3"/><line x1="798.93" y1="235.63" x2="799.56" y2="237.21" stroke="#f4f4f4" stroke-width="0.7"/><line x1="802.40" y1="234.44" x2="802.87" y2="236.08" stroke="#f4f4f4" stroke-width="0.7"/><line x1="805.96" y1="233.59" x2="806.28" y2="235.26" stroke="#f4f4f4" stroke-width="0.7"/><line x1="809.59" y1="233.07" x2="809.75" y2="234.77" stroke="#f4f4f4" stroke-width="0.7"/><line x1="813.25" y1="232.90" x2="813.25" y2="236.60" stroke="#f4f4f4" stroke-width="1.3"/><line x1="816.91" y1="233.07" x2="816.75" y2="234.77" stroke="#f4f4f4" stroke-width="0.7"/><line x1="820.54" y1="233.59" x2="820.22" y2="235.26" stroke="#f4f4f4" stroke-width="0.7"/><line x1="824.10" y1="234.44" x2="823.63" y2="236.08" stroke="#f4f4f4" stroke-width="0.7"/><line x1="827.57" y1="235.63" x2="826.94" y2="237.21" stroke="#f4f4f4" stroke-width="0.7"/><line x1="830.91" y1="237.14" x2="829.23" y2="240.44" stroke="#f4f4f4" stroke-width="1.3"/><line x1="834.09" y1="238.96" x2="833.18" y2="240.39" stroke="#f4f4f4" stroke-width="0.7"/><line x1="837.09" y1="241.06" x2="836.05" y2="242.41" stroke="#f4f4f4" stroke-width="0.7"/><line x1="839.88" y1="243.44" x2="838.72" y2="244.68" stroke="#f4f4f4" stroke-width="0.7"/><line x1="842.43" y1="246.07" x2="841.15" y2="247.20" stroke="#f4f4f4" stroke-width="0.7"/><line x1="844.72" y1="248.94" x2="841.73" y2="251.11" stroke="#f4f4f4" stroke-width="1.3"/><line x1="846.73" y1="252.00" x2="845.27" y2="252.86" stroke="#f4f4f4" stroke-width="0.7"/><line x1="848.45" y1="255.24" x2="846.91" y2="255.96" stroke="#f4f4f4" stroke-width="0.7"/><line x1="849.85" y1="258.62" x2="848.25" y2="259.20" stroke="#f4f4f4" stroke-width="0.7"/><line x1="850.93" y1="262.13" x2="849.28" y2="262.55" stroke="#f4f4f4" stroke-width="0.7"/><line x1="851.67" y1="265.71" x2="848.02" y2="266.29" stroke="#f4f4f4" stroke-width="1.3"/><line x1="852.07" y1="269.36" x2="850.38" y2="269.46" stroke="#f4f4f4" stroke-width="0.7"/><line x1="852.13" y1="273.02" x2="850.43" y2="272.97" stroke="#f4f4f4" stroke-width="0.7"/><line x1="851.84" y1="276.68" x2="850.16" y2="276.46" stroke="#f4f4f4" stroke-width="0.7"/><line x1="851.21" y1="280.29" x2="849.55" y2="279.91" stroke="#f4f4f4" stroke-width="0.7"/><line x1="850.25" y1="283.82" x2="846.73" y2="282.68" stroke="#f4f4f4" stroke-width="1.3"/><line x1="848.95" y1="287.25" x2="847.39" y2="286.57" stroke="#f4f4f4" stroke-width="0.7"/><line x1="847.34" y1="290.54" x2="845.85" y2="289.72" stroke="#f4f4f4" stroke-width="0.7"/><line x1="845.42" y1="293.67" x2="844.02" y2="292.71" stroke="#f4f4f4" stroke-width="0.7"/><line x1="843.22" y1="296.60" x2="841.91" y2="295.51" stroke="#f4f4f4" stroke-width="0.7"/><line x1="840.76" y1="299.31" x2="838.14" y2="296.69" stroke="#f4f4f4" stroke-width="1.3"/><path d="M801.41 284.94 A17.69 17.69 0 1 1 825.09 284.94" fill="none" stroke="#1ff01f" stroke-width="4.82"/><text x="793.35" y="293.90" fill="#ececec" font-size="6.83" text-anchor="middle" font-family="Liberation Sans" letter-spacing="-0.2">-10</text><text x="786.49" y="282.70" fill="#ececec" font-size="6.83" text-anchor="middle" font-family="Liberation Sans" letter-spacing="-0.2">-8</text><text x="785.46" y="269.60" fill="#ececec" font-size="6.83" text-anchor="middle" font-family="Liberation Sans" letter-spacing="-0.2">-6</text><text x="790.48" y="257.46" fill="#ececec" font-size="6.83" text-anchor="middle" font-family="Liberation Sans" letter-spacing="-0.2">-4</text><text x="800.47" y="248.93" fill="#ececec" font-size="6.83" text-anchor="middle" font-family="Liberation Sans" letter-spacing="-0.2">-2</text><text x="813.25" y="245.86" fill="#ececec" font-size="6.83" text-anchor="middle" font-family="Liberation Sans" letter-spacing="-0.2">0</text><text x="826.03" y="248.93" fill="#ececec" font-size="6.83" text-anchor="middle" font-family="Liberation Sans" letter-spacing="-0.2">2</text><text x="836.02" y="257.46" fill="#ececec" font-size="6.83" text-anchor="middle" font-family="Liberation Sans" letter-spacing="-0.2">4</text><text x="841.04" y="269.60" fill="#ececec" font-size="6.83" text-anchor="middle" font-family="Liberation Sans" letter-spacing="-0.2">6</text><text x="840.01" y="282.70" fill="#ececec" font-size="6.83" text-anchor="middle" font-family="Liberation Sans" letter-spacing="-0.2">8</text><text x="833.15" y="293.90" fill="#ececec" font-size="6.83" text-anchor="middle" font-family="Liberation Sans" letter-spacing="-0.2">10</text><ellipse cx="813.25" cy="301.95" rx="18.09" ry="6.03" fill="#667074" opacity="0.45"/><text x="813.25" y="304.95" fill="#f8f8f8" font-size="9.05" font-weight="bold" text-anchor="middle" font-family="Liberation Sans">2.76</text><path d="M814.60 272.83 L835.64 242.36 L811.90 270.77Z" fill="#ff2222"/><circle cx="813.25" cy="271.8" r="4.02" fill="url(#hub)"/><text x="813.25" y="323.80" fill="#18f018" font-size="6.6" font-weight="bold" text-anchor="middle" font-family="Liberation Sans" letter-spacing="-0.2">Velocity</text><circle cx="915.5" cy="271.8" r="40.2" fill="url(#face)" stroke="#dcdcdc" stroke-width="1.1"/><circle cx="915.5" cy="271.8" r="32.16" fill="#525a5e" opacity="0.45"/><line x1="887.99" y1="299.31" x2="890.61" y2="296.69" stroke="#f4f4f4" stroke-width="1.3"/><line x1="884.95" y1="295.88" x2="886.29" y2="294.83" stroke="#f4f4f4" stroke-width="0.7"/><line x1="882.33" y1="292.13" x2="883.78" y2="291.24" stroke="#f4f4f4" stroke-width="0.7"/><line x1="880.17" y1="288.09" x2="881.72" y2="287.37" stroke="#f4f4f4" stroke-width="0.7"/><line x1="878.50" y1="283.82" x2="880.12" y2="283.30" stroke="#f4f4f4" stroke-width="0.7"/><line x1="877.35" y1="279.39" x2="880.98" y2="278.67" stroke="#f4f4f4" stroke-width="1.3"/><line x1="876.72" y1="274.85" x2="878.41" y2="274.72" stroke="#f4f4f4" stroke-width="0.7"/><line x1="876.63" y1="270.27" x2="878.33" y2="270.34" stroke="#f4f4f4" stroke-width="0.7"/><line x1="877.08" y1="265.71" x2="878.76" y2="265.98" stroke="#f4f4f4" stroke-width="0.7"/><line x1="878.06" y1="261.24" x2="879.70" y2="261.70" stroke="#f4f4f4" stroke-width="0.7"/><line x1="879.56" y1="256.91" x2="882.98" y2="258.33" stroke="#f4f4f4" stroke-width="1.3"/><line x1="881.56" y1="252.79" x2="883.04" y2="253.62" stroke="#f4f4f4" stroke-width="0.7"/><line x1="884.03" y1="248.94" x2="885.40" y2="249.93" stroke="#f4f4f4" stroke-width="0.7"/><line x1="886.93" y1="245.39" x2="888.18" y2="246.55" stroke="#f4f4f4" stroke-width="0.7"/><line x1="890.24" y1="242.22" x2="891.34" y2="243.51" stroke="#f4f4f4" stroke-width="0.7"/><line x1="893.89" y1="239.46" x2="895.94" y2="242.53" stroke="#f4f4f4" stroke-width="1.3"/><line x1="897.84" y1="237.14" x2="898.61" y2="238.65" stroke="#f4f4f4" stroke-width="0.7"/><line x1="902.04" y1="235.30" x2="902.62" y2="236.90" stroke="#f4f4f4" stroke-width="0.7"/><line x1="906.42" y1="233.97" x2="906.82" y2="235.63" stroke="#f4f4f4" stroke-width="0.7"/><line x1="910.93" y1="233.17" x2="911.13" y2="234.86" stroke="#f4f4f4" stroke-width="0.7"/><line x1="915.50" y1="232.90" x2="915.50" y2="236.60" stroke="#f4f4f4" stroke-width="1.3"/><line x1="920.07" y1="233.17" x2="919.87" y2="234.86" stroke="#f4f4f4" stroke-width="0.7"/><line x1="924.58" y1="233.97" x2="924.18" y2="235.63" stroke="#f4f4f4" stroke-width="0.7"/><line x1="928.96" y1="235.30" x2="928.38" y2="236.90" stroke="#f4f4f4" stroke-width="0.7"/><line x1="933.16" y1="237.14" x2="932.39" y2="238.65" stroke="#f4f4f4" stroke-width="0.7"/><line x1="937.11" y1="239.46" x2="935.06" y2="242.53" stroke="#f4f4f4" stroke-width="1.3"/><line x1="940.76" y1="242.22" x2="939.66" y2="243.51" stroke="#f4f4f4" stroke-width="0.7"/><line x1="944.07" y1="245.39" x2="942.82" y2="246.55" stroke="#f4f4f4" stroke-width="0.7"/><line x1="946.97" y1="248.94" x2="945.60" y2="249.93" stroke="#f4f4f4" stroke-width="0.7"/><line x1="949.44" y1="252.79" x2="947.96" y2="253.62" stroke="#f4f4f4" stroke-width="0.7"/><line x1="951.44" y1="256.91" x2="948.02" y2="258.33" stroke="#f4f4f4" stroke-width="1.3"/><line x1="952.94" y1="261.24" x2="951.30" y2="261.70" stroke="#f4f4f4" stroke-width="0.7"/><line x1="953.92" y1="265.71" x2="952.24" y2="265.98" stroke="#f4f4f4" stroke-width="0.7"/><line x1="954.37" y1="270.27" x2="952.67" y2="270.34" stroke="#f4f4f4" stroke-width="0.7"/><line x1="954.28" y1="274.85" x2="952.59" y2="274.72" stroke="#f4f4f4" stroke-width="0.7"/><line x1="953.65" y1="279.39" x2="950.02" y2="278.67" stroke="#f4f4f4" stroke-width="1.3"/><line x1="952.50" y1="283.82" x2="950.88" y2="283.30" stroke="#f4f4f4" stroke-width="0.7"/><line x1="950.83" y1="288.09" x2="949.28" y2="287.37" stroke="#f4f4f4" stroke-width="0.7"/><line x1="948.67" y1="292.13" x2="947.22" y2="291.24" stroke="#f4f4f4" stroke-width="0.7"/><line x1="946.05" y1="295.88" x2="944.71" y2="294.83" stroke="#f4f4f4" stroke-width="0.7"/><line x1="943.01" y1="299.31" x2="940.39" y2="296.69" stroke="#f4f4f4" stroke-width="1.3"/><path d="M903.66 284.94 A17.69 17.69 0 1 1 927.34 284.94" fill="none" stroke="#1ff01f" stroke-width="4.82"/><text x="895.60" y="293.90" fill="#ececec" font-size="6.83" text-anchor="middle" font-family="Liberation Sans" letter-spacing="-0.2">-20</text><text x="887.90" y="279.49" fill="#ececec" font-size="6.83" text-anchor="middle" font-family="Liberation Sans" letter-spacing="-0.2">-15</text><text x="889.50" y="263.23" fill="#ececec" font-size="6.83" text-anchor="middle" font-family="Liberation Sans" letter-spacing="-0.2">-10</text><text x="899.87" y="250.60" fill="#ececec" font-size="6.83" text-anchor="middle" font-family="Liberation Sans" letter-spacing="-0.2">-5</text><text x="915.50" y="245.86" fill="#ececec" font-size="6.83" text-anchor="middle" font-family="Liberation Sans" letter-spacing="-0.2">0</text><text x="931.13" y="250.60" fill="#ececec" font-size="6.83" text-anchor="middle" font-family="Liberation Sans" letter-spacing="-0.2">5</text><text x="941.50" y="263.23" fill="#ececec" font-size="6.83" text-anchor="middle" font-family="Liberation Sans" letter-spacing="-0.2">10</text><text x="943.10" y="279.49" fill="#ececec" font-size="6.83" text-anchor="middle" font-family="Liberation Sans" letter-spacing="-0.2">15</text><text x="935.40" y="293.90" fill="#ececec" font-size="6.83" text-anchor="middle" font-family="Liberation Sans" letter-spacing="-0.2">20</text><ellipse cx="915.5" cy="301.95" rx="18.09" ry="6.03" fill="#667074" opacity="0.45"/><text x="915.5" y="304.95" fill="#f8f8f8" font-size="9.05" font-weight="bold" text-anchor="middle" font-family="Liberation Sans">15</text><path d="M915.17 273.47 L951.77 279.02 L915.83 270.13Z" fill="#ff2222"/><circle cx="915.5" cy="271.8" r="4.02" fill="url(#hub)"/><text x="915.5" y="323.80" fill="#18f018" font-size="6.6" font-weight="bold" text-anchor="middle" font-family="Liberation Sans" letter-spacing="-0.2">Voltage Command</text><rect x="964.4" y="225.2" width="44.6" height="107.3" fill="#000"/><rect x="964.4" y="225.2" width="44.6" height="13.5" fill="#8a4200"/><text x="967" y="235" fill="#fff" font-size="8" font-weight="bold" font-family="Liberation Sans">Alarms</text><rect x="971.5" y="245" width="37.5" height="38.7" fill="url(#abl)"/><circle cx="988.5" cy="263.3" r="11.5" fill="url(#ball)" stroke="#c8c8c8" stroke-width="0.6"/><rect x="971.5" y="290.8" width="37.5" height="37.4" fill="url(#ared)"/><circle cx="988.5" cy="307.9" r="11.5" fill="url(#ball)" stroke="#c8c8c8" stroke-width="0.6"/><text x="1005" y="310" fill="#400" font-size="7" font-family="Liberation Sans">M</text><rect x="1013.8" y="146" width="1.6" height="163" fill="#8a8a8a" rx="0.8"/><rect x="738" y="336.8" width="169" height="1.6" fill="#8a8a8a" rx="0.8"/></svg>
<svg style="left:25px;top:350.5px" width="9" height="10"><circle cx="3.5" cy="2.5" r="2" fill="#b08a60"/><path d="M0.5 9Q0.5 4.5 3.5 4.5Q6.5 4.5 6.5 9Z" fill="#6a5a4a"/><circle cx="6" cy="7" r="2.6" fill="#f0b820" stroke="#c08a10" stroke-width="0.5"/></svg>
<div class="t" style="left:34.5px;top:350.9px;font-size:7px;letter-spacing:0;color:#333;transform:none">User Codes Management</div>
<svg style="left:117px;top:352.5px" width="6" height="6"><path d="M0.7 0.7L5.3 5.3M5.3 0.7L0.7 5.3" stroke="#cdcdcd" stroke-width="1.4"/></svg>
<div style="left:134.25px;top:351.5px;width:8px;height:8px;background:#2a5a90;border:1px solid #9ab0c8"></div>
<svg style="left:135px;top:353px" width="6" height="5"><path d="M0 3H2L3 1L4 4L5 2.5H6" fill="none" stroke="#bfe" stroke-width="0.7"/></svg>
<div class="t" style="left:144.5px;top:350.9px;font-size:7px;letter-spacing:0;color:#333;transform:none">Monitoring management</div>
<svg style="left:230px;top:352px" width="7" height="7"><circle cx="3.5" cy="3.5" r="3" fill="#eee" stroke="#aaa" stroke-width="0.6"/><circle cx="3.5" cy="3.5" r="1.6" fill="#e02020"/></svg>
<div class="t" style="left:241.25px;top:350.9px;font-size:7px;letter-spacing:0;color:#333;transform:none">Recording Management</div>
<svg style="left:326px;top:352px" width="8" height="8"><path d="M0.5 4.5L3 7.5L7.5 0.5" fill="none" stroke="#3aa03a" stroke-width="1.3"/></svg>
<div class="t" style="left:335.5px;top:350.9px;font-size:7px;letter-spacing:0;color:#333;transform:none">Tests management</div>
<svg style="left:530.5px;top:351.5px" width="8" height="8"><path d="M1.5 4A2.5 2.5 0 0 1 6 2.5M6.5 4A2.5 2.5 0 0 1 2 5.5" fill="none" stroke="#2a6ad0" stroke-width="1.3"/><path d="M5 0.5L7 2.8L4.5 3.2Z M3 7.5L1 5.2L3.5 4.8Z" fill="#2a6ad0"/></svg>
<div style="left:23.3px;top:366px;width:541.5px;height:125.5px;background:#fff;border:1px solid #a8a8a8"></div>
<div style="left:221px;top:367px;width:1px;height:124px;background:#ececec"></div>
<div style="left:358.5px;top:367px;width:1px;height:124px;background:#ececec"></div>
<div style="left:409.25px;top:367px;width:1px;height:124px;background:#ececec"></div>
<div style="left:460.25px;top:367px;width:1px;height:124px;background:#ececec"></div>
<div style="left:511.5px;top:367px;width:1px;height:124px;background:#ececec"></div>
<div style="left:24.3px;top:390px;width:540px;height:1px;background:#eeeeee"></div>
<div style="left:24.3px;top:400px;width:540px;height:1px;background:#eeeeee"></div>
<div style="left:24.3px;top:410px;width:540px;height:1px;background:#eeeeee"></div>
<div style="left:24.3px;top:420px;width:540px;height:1px;background:#eeeeee"></div>
<div style="left:24.3px;top:430px;width:540px;height:1px;background:#eeeeee"></div>
<div style="left:24.3px;top:440px;width:540px;height:1px;background:#eeeeee"></div>
<div style="left:24.3px;top:450px;width:540px;height:1px;background:#eeeeee"></div>
<div style="left:24.3px;top:460px;width:540px;height:1px;background:#eeeeee"></div>
<div style="left:24.3px;top:470px;width:540px;height:1px;background:#eeeeee"></div>
<div style="left:24.3px;top:480px;width:540px;height:1px;background:#eeeeee"></div>
<div class="t" style="left:27px;top:368.7px;color:#222">Name</div>
<div class="t" style="left:224.5px;top:368.7px;color:#222">State</div>
<svg style="left:26.75px;top:383.5px" width="5" height="4"><path d="M0.5 0.5L2.5 3L4.5 0.5" fill="none" stroke="#3a3a3a" stroke-width="0.95"/></svg>
<svg style="left:34px;top:380.5px" width="10" height="9"><path d="M0.5 1.5H3.5L4.5 2.5H8.5V8H0.5Z" fill="#8aa8c8" stroke="#6a88a8" stroke-width="0.5"/><circle cx="6.8" cy="6.3" r="2.4" fill="#f0b820"/></svg>
<div class="t" style="left:45.75px;top:380.4px;letter-spacing:-0.12px;color:#111">Group B</div>
<svg style="left:222.5px;top:381px" width="8" height="8"><circle cx="4" cy="4" r="3.4" fill="#e6fae6" stroke="#40c040" stroke-width="0.9"/><path d="M3 2.3L5.6 4L3 5.7Z" fill="#20a020"/></svg>
<div class="t" style="left:232.5px;top:380.4px;color:#111">Running</div>
<svg style="left:411.3px;top:381px" width="8" height="8"><circle cx="4" cy="4" r="3.6" fill="#fde6e6" stroke="#f0a0a0" stroke-width="0.9"/><path d="M3 2.2L6 4L3 5.8Z" fill="#c83a3a"/></svg>
<svg style="left:462px;top:381px" width="8" height="8"><circle cx="4" cy="4" r="3.7" fill="#e8fbe8" stroke="#6ad86a" stroke-width="0.8"/><path d="M2.9 2.4v3.2M5.1 2.4v3.2" stroke="#30b030" stroke-width="1.1"/></svg>
<svg style="left:43.5px;top:390px" width="9" height="10"><circle cx="3.5" cy="2.5" r="2" fill="#b08a60"/><path d="M0.5 9Q0.5 4.5 3.5 4.5Q6.5 4.5 6.5 9Z" fill="#6a5a4a"/><circle cx="6" cy="7" r="2.6" fill="#f0b820" stroke="#c08a10" stroke-width="0.5"/></svg>
<div class="t" style="left:54.5px;top:390.4px;color:#111">B_MotorPhys</div>
<svg style="left:222.5px;top:391px" width="8" height="8"><circle cx="4" cy="4" r="3.4" fill="#e6fae6" stroke="#40c040" stroke-width="0.9"/><path d="M3 2.3L5.6 4L3 5.7Z" fill="#20a020"/></svg>
<div class="t" style="left:232.5px;top:390.4px;color:#111">Running</div>
<svg style="left:411.3px;top:391px" width="8" height="8"><circle cx="4" cy="4" r="3.6" fill="#fde6e6" stroke="#f0a0a0" stroke-width="0.9"/><path d="M3 2.2L6 4L3 5.8Z" fill="#c83a3a"/></svg>
<svg style="left:462px;top:391px" width="8" height="8"><circle cx="4" cy="4" r="3.7" fill="#e8fbe8" stroke="#6ad86a" stroke-width="0.8"/><path d="M2.9 2.4v3.2M5.1 2.4v3.2" stroke="#30b030" stroke-width="1.1"/></svg>
<svg style="left:512.5px;top:391px" width="8" height="8"><circle cx="4" cy="4" r="3.6" fill="#fde6e6" stroke="#f0a0a0" stroke-width="0.9"/><rect x="2.3" y="2.3" width="3.4" height="3.4" rx="0.6" fill="#d85050"/></svg>
<svg style="left:43.5px;top:400px" width="9" height="10"><circle cx="3.5" cy="2.5" r="2" fill="#b08a60"/><path d="M0.5 9Q0.5 4.5 3.5 4.5Q6.5 4.5 6.5 9Z" fill="#6a5a4a"/><circle cx="6" cy="7" r="2.6" fill="#f0b820" stroke="#c08a10" stroke-width="0.5"/></svg>
<div class="t" style="left:54.5px;top:400.4px;color:#111">B_MotorControl</div>
<svg style="left:222.5px;top:401px" width="8" height="8"><circle cx="4" cy="4" r="3.4" fill="#e6fae6" stroke="#40c040" stroke-width="0.9"/><path d="M3 2.3L5.6 4L3 5.7Z" fill="#20a020"/></svg>
<div class="t" style="left:232.5px;top:400.4px;color:#111">Running</div>
<svg style="left:411.3px;top:401px" width="8" height="8"><circle cx="4" cy="4" r="3.6" fill="#fde6e6" stroke="#f0a0a0" stroke-width="0.9"/><path d="M3 2.2L6 4L3 5.8Z" fill="#c83a3a"/></svg>
<svg style="left:462px;top:401px" width="8" height="8"><circle cx="4" cy="4" r="3.7" fill="#e8fbe8" stroke="#6ad86a" stroke-width="0.8"/><path d="M2.9 2.4v3.2M5.1 2.4v3.2" stroke="#30b030" stroke-width="1.1"/></svg>
<svg style="left:512.5px;top:401px" width="8" height="8"><circle cx="4" cy="4" r="3.6" fill="#fde6e6" stroke="#f0a0a0" stroke-width="0.9"/><rect x="2.3" y="2.3" width="3.4" height="3.4" rx="0.6" fill="#d85050"/></svg>
<svg style="left:26.75px;top:413.5px" width="5" height="4"><path d="M0.5 0.5L2.5 3L4.5 0.5" fill="none" stroke="#3a3a3a" stroke-width="0.95"/></svg>
<svg style="left:34px;top:410.5px" width="10" height="9"><path d="M0.5 1.5H3.5L4.5 2.5H8.5V8H0.5Z" fill="#8aa8c8" stroke="#6a88a8" stroke-width="0.5"/><circle cx="6.8" cy="6.3" r="2.4" fill="#f0b820"/></svg>
<div class="t" style="left:45.75px;top:410.4px;letter-spacing:-0.12px;color:#111">Group A</div>
<svg style="left:222.5px;top:411px" width="8" height="8"><circle cx="4" cy="4" r="3.4" fill="#e6fae6" stroke="#40c040" stroke-width="0.9"/><path d="M3 2.3L5.6 4L3 5.7Z" fill="#20a020"/></svg>
<div class="t" style="left:232.5px;top:410.4px;color:#111">Running</div>
<svg style="left:411.3px;top:411px" width="8" height="8"><circle cx="4" cy="4" r="3.6" fill="#fde6e6" stroke="#f0a0a0" stroke-width="0.9"/><path d="M3 2.2L6 4L3 5.8Z" fill="#c83a3a"/></svg>
<svg style="left:462px;top:411px" width="8" height="8"><circle cx="4" cy="4" r="3.7" fill="#e8fbe8" stroke="#6ad86a" stroke-width="0.8"/><path d="M2.9 2.4v3.2M5.1 2.4v3.2" stroke="#30b030" stroke-width="1.1"/></svg>
<svg style="left:43.5px;top:420px" width="9" height="10"><circle cx="3.5" cy="2.5" r="2" fill="#b08a60"/><path d="M0.5 9Q0.5 4.5 3.5 4.5Q6.5 4.5 6.5 9Z" fill="#6a5a4a"/><circle cx="6" cy="7" r="2.6" fill="#f0b820" stroke="#c08a10" stroke-width="0.5"/></svg>
<div class="t" style="left:54.5px;top:420.4px;color:#111">A_MotorControl</div>
<svg style="left:222.5px;top:421px" width="8" height="8"><circle cx="4" cy="4" r="3.4" fill="#e6fae6" stroke="#40c040" stroke-width="0.9"/><path d="M3 2.3L5.6 4L3 5.7Z" fill="#20a020"/></svg>
<div class="t" style="left:232.5px;top:420.4px;color:#111">Running</div>
<svg style="left:411.3px;top:421px" width="8" height="8"><circle cx="4" cy="4" r="3.6" fill="#fde6e6" stroke="#f0a0a0" stroke-width="0.9"/><path d="M3 2.2L6 4L3 5.8Z" fill="#c83a3a"/></svg>
<svg style="left:462px;top:421px" width="8" height="8"><circle cx="4" cy="4" r="3.7" fill="#e8fbe8" stroke="#6ad86a" stroke-width="0.8"/><path d="M2.9 2.4v3.2M5.1 2.4v3.2" stroke="#30b030" stroke-width="1.1"/></svg>
<svg style="left:512.5px;top:421px" width="8" height="8"><circle cx="4" cy="4" r="3.6" fill="#fde6e6" stroke="#f0a0a0" stroke-width="0.9"/><rect x="2.3" y="2.3" width="3.4" height="3.4" rx="0.6" fill="#d85050"/></svg>
<svg style="left:43.5px;top:430px" width="9" height="10"><circle cx="3.5" cy="2.5" r="2" fill="#b08a60"/><path d="M0.5 9Q0.5 4.5 3.5 4.5Q6.5 4.5 6.5 9Z" fill="#6a5a4a"/><circle cx="6" cy="7" r="2.6" fill="#f0b820" stroke="#c08a10" stroke-width="0.5"/></svg>
<div class="t" style="left:54.5px;top:430.4px;color:#111">A_MotorPhys</div>
<svg style="left:222.5px;top:431px" width="8" height="8"><circle cx="4" cy="4" r="3.4" fill="#e6fae6" stroke="#40c040" stroke-width="0.9"/><path d="M3 2.3L5.6 4L3 5.7Z" fill="#20a020"/></svg>
<div class="t" style="left:232.5px;top:430.4px;color:#111">Running</div>
<svg style="left:411.3px;top:431px" width="8" height="8"><circle cx="4" cy="4" r="3.6" fill="#fde6e6" stroke="#f0a0a0" stroke-width="0.9"/><path d="M3 2.2L6 4L3 5.8Z" fill="#c83a3a"/></svg>
<svg style="left:462px;top:431px" width="8" height="8"><circle cx="4" cy="4" r="3.7" fill="#e8fbe8" stroke="#6ad86a" stroke-width="0.8"/><path d="M2.9 2.4v3.2M5.1 2.4v3.2" stroke="#30b030" stroke-width="1.1"/></svg>
<svg style="left:512.5px;top:431px" width="8" height="8"><circle cx="4" cy="4" r="3.6" fill="#fde6e6" stroke="#f0a0a0" stroke-width="0.9"/><rect x="2.3" y="2.3" width="3.4" height="3.4" rx="0.6" fill="#d85050"/></svg>
<svg style="left:577px;top:351px" width="9" height="9"><rect x="1.5" y="2" width="7" height="7" fill="#f0f0e0" stroke="#999" stroke-width="0.6"/><circle cx="3" cy="3" r="2.6" fill="#e02020"/></svg>
<div class="t" style="left:586.5px;top:350.9px;font-size:7px;letter-spacing:0;color:#333;transform:none">LogBook</div>
<div style="left:625px;top:351.5px;width:7.5px;height:8px;background:#e8eef4;border:1px solid #8a9ab0"></div>
<div class="t" style="left:635.25px;top:350.9px;font-size:7px;letter-spacing:0;color:#333;transform:none">Properties</div>
<svg style="left:677px;top:351.5px" width="8" height="8"><rect x="0" y="0" width="8" height="8" fill="#6a7a8a"/><path d="M0 2.5H8M2.7 0V8M5.4 0V8" stroke="#cdd" stroke-width="0.6"/></svg>
<div class="t" style="left:687px;top:350.9px;font-size:7px;letter-spacing:0;color:#333;transform:none">MMI Logs</div>
<svg style="left:728.5px;top:351.5px" width="8" height="8"><rect x="0.5" y="0.5" width="7" height="6" fill="#cfe0f0" stroke="#2a5a9a" stroke-width="0.8"/><rect x="2" y="7" width="4" height="1" fill="#2a5a9a"/></svg>
<div class="t" style="left:738.25px;top:350.9px;font-size:7px;letter-spacing:0;color:#333;transform:none">Console</div>
<svg style="left:939px;top:351.5px" width="8" height="8"><path d="M1.5 4A2.5 2.5 0 0 1 6 2.5M6.5 4A2.5 2.5 0 0 1 2 5.5" fill="none" stroke="#2a6ad0" stroke-width="1.3"/><path d="M5 0.5L7 2.8L4.5 3.2Z M3 7.5L1 5.2L3.5 4.8Z" fill="#2a6ad0"/></svg>
<svg style="left:952.5px;top:352px" width="7" height="7"><path d="M1 1L6 6M6 1L1 6" stroke="#e02020" stroke-width="1.8"/></svg>
<svg style="left:964.5px;top:351.5px" width="8" height="8"><circle cx="4" cy="4" r="2.5" fill="none" stroke="#4a8a3a" stroke-width="1.6" stroke-dasharray="1.3 0.7"/><circle cx="4" cy="4" r="1.2" fill="#8ac060"/></svg>
<svg style="left:976.75px;top:354.5px" width="5" height="3"><path d="M0 0H5L2.5 3Z" fill="#222"/></svg>
<svg style="left:984px;top:351.5px" width="8" height="8"><path d="M1 1L7 7" stroke="#3060c0" stroke-width="1.6"/><path d="M7 1L1 7" stroke="#404040" stroke-width="1.6"/></svg>
<div style="left:575.2px;top:366px;width:444px;height:125.5px;background:#fff;border:1px solid #a8a8a8"></div>
<div style="left:1007px;top:367px;width:11.5px;height:123.5px;background:#f0f0f0"></div>
<div style="left:1012.5px;top:376px;width:1.6px;height:61.5px;background:#8a8a8a;border-radius:1px"></div>
<div style="left:884.25px;top:367px;width:1px;height:123.5px;background:#ececec"></div>
<div class="t" style="left:582px;top:369.0px;color:#222">Message</div>
<div class="t" style="left:888px;top:369.0px;color:#222">Date</div>
<div style="left:576.2px;top:391.0px;width:431px;height:1px;background:#eeeeee"></div>
<div style="left:576.2px;top:401.5px;width:431px;height:1px;background:#eeeeee"></div>
<div style="left:576.2px;top:412.0px;width:431px;height:1px;background:#eeeeee"></div>
<div style="left:576.2px;top:422.5px;width:431px;height:1px;background:#eeeeee"></div>
<div style="left:576.2px;top:433.0px;width:431px;height:1px;background:#eeeeee"></div>
<div style="left:576.2px;top:443.5px;width:431px;height:1px;background:#eeeeee"></div>
<div style="left:576.2px;top:454.0px;width:431px;height:1px;background:#eeeeee"></div>
<div style="left:576.2px;top:464.5px;width:431px;height:1px;background:#eeeeee"></div>
<div style="left:576.2px;top:475.0px;width:431px;height:1px;background:#eeeeee"></div>
<div style="left:576.2px;top:485.5px;width:431px;height:1px;background:#eeeeee"></div>
<div style="left:576px;top:381px;width:431px;height:110px;overflow:hidden">
<div class="t" style="left:5px;top:0.0px;font-size:9px;font-weight:bold;font-family:Liberation Serif;color:#2a4cc0;-webkit-text-stroke:0.2px #2a4cc0">i</div>
<div class="t" style="left:12.5px;top:0.40000000000000036px;letter-spacing:-0.12px;color:#111">Configuring Alarms/Motor_B_Speed_Warning</div>
<div class="t" style="left:311.5px;top:0.40000000000000036px;letter-spacing:-0.24px;color:#111">2025-10-28 18:23:48:481</div>
<div class="t" style="left:5px;top:10.5px;font-size:9px;font-weight:bold;font-family:Liberation Serif;color:#2a4cc0;-webkit-text-stroke:0.2px #2a4cc0">i</div>
<div class="t" style="left:12.5px;top:10.9px;letter-spacing:-0.12px;color:#111">Configuring Alarms/Motor_B_Overspeed</div>
<div class="t" style="left:311.5px;top:10.9px;letter-spacing:-0.24px;color:#111">2025-10-28 18:23:48:481</div>
<div class="t" style="left:5px;top:21.0px;font-size:9px;font-weight:bold;font-family:Liberation Serif;color:#2a4cc0;-webkit-text-stroke:0.2px #2a4cc0">i</div>
<div class="t" style="left:12.5px;top:21.4px;letter-spacing:-0.12px;color:#111">Configuring Alarms/Motor_A_Speed_Warning</div>
<div class="t" style="left:311.5px;top:21.4px;letter-spacing:-0.24px;color:#111">2025-10-28 18:23:48:481</div>
<div class="t" style="left:5px;top:31.5px;font-size:9px;font-weight:bold;font-family:Liberation Serif;color:#2a4cc0;-webkit-text-stroke:0.2px #2a4cc0">i</div>
<div class="t" style="left:12.5px;top:31.9px;letter-spacing:-0.12px;color:#111">Configuring Alarms/Motor_A_Overspeed</div>
<div class="t" style="left:311.5px;top:31.9px;letter-spacing:-0.24px;color:#111">2025-10-28 18:23:48:481</div>
<div class="t" style="left:5px;top:42.0px;font-size:9px;font-weight:bold;font-family:Liberation Serif;color:#2a4cc0;-webkit-text-stroke:0.2px #2a4cc0">i</div>
<div class="t" style="left:12.5px;top:42.4px;letter-spacing:-0.12px;color:#111">RTC Server is started</div>
<div class="t" style="left:311.5px;top:42.4px;letter-spacing:-0.24px;color:#111">2025-10-28 18:23:38:834</div>
<div class="t" style="left:5px;top:52.5px;font-size:9px;font-weight:bold;font-family:Liberation Serif;color:#2a4cc0;-webkit-text-stroke:0.2px #2a4cc0">i</div>
<div class="t" style="left:12.5px;top:52.9px;letter-spacing:-0.12px;color:#111">Successful starting of node &#39;Virtual_PXI&#39; (192.168.56.127:9090)</div>
<div class="t" style="left:311.5px;top:52.9px;letter-spacing:-0.24px;color:#111">2025-10-28 18:23:38:834</div>
<div class="t" style="left:5px;top:63.0px;font-size:9px;font-weight:bold;font-family:Liberation Serif;color:#2a4cc0;-webkit-text-stroke:0.2px #2a4cc0">i</div>
<div class="t" style="left:12.5px;top:63.4px;letter-spacing:-0.12px;color:#111">Server RTC is configured with &#39;Simu_A429&#39;</div>
<div class="t" style="left:311.5px;top:63.4px;letter-spacing:-0.24px;color:#111">2025-10-28 18:23:36:336</div>
<div class="t" style="left:5px;top:73.5px;font-size:9px;font-weight:bold;font-family:Liberation Serif;color:#2a4cc0;-webkit-text-stroke:0.2px #2a4cc0">i</div>
<div class="t" style="left:12.5px;top:73.9px;letter-spacing:-0.12px;color:#111">Successful configuration of node &#39;Virtual_PXI&#39; (192.168.56.127:9090)</div>
<div class="t" style="left:311.5px;top:73.9px;letter-spacing:-0.24px;color:#111">2025-10-28 18:23:36:273</div>
<div class="t" style="left:5px;top:84.0px;font-size:9px;font-weight:bold;font-family:Liberation Serif;color:#2a4cc0;-webkit-text-stroke:0.2px #2a4cc0">i</div>
<div class="t" style="left:12.5px;top:84.4px;letter-spacing:-0.12px;color:#111">Successful connection to node &#39;Virtual_PXI&#39; (192.168.56.127:9090)</div>
<div class="t" style="left:311.5px;top:84.4px;letter-spacing:-0.24px;color:#111">2025-10-28 18:23:35:896</div>
<div class="t" style="left:5px;top:94.5px;font-size:9px;font-weight:bold;font-family:Liberation Serif;color:#2a4cc0;-webkit-text-stroke:0.2px #2a4cc0">i</div>
<div class="t" style="left:12.5px;top:94.9px;letter-spacing:-0.12px;color:#111">Connecting to node &#39;Virtual_PXI&#39; (192.168.56.127:9090)</div>
<div class="t" style="left:311.5px;top:94.9px;letter-spacing:-0.24px;color:#111">2025-10-28 18:23:35:896</div>
<div class="t" style="left:5px;top:105.0px;font-size:9px;font-weight:bold;font-family:Liberation Serif;color:#2a4cc0;-webkit-text-stroke:0.2px #2a4cc0">i</div>
<div class="t" style="left:12.5px;top:105.4px;letter-spacing:-0.12px;color:#111">Successful connection to node &#39;Virtual_PXI&#39; (192.168.56.127:9090)</div>
<div class="t" style="left:311.5px;top:105.4px;letter-spacing:-0.24px;color:#111">2025-10-28 18:23:35:896</div>
</div>
<div class="t" style="left:806.5px;top:464.9px;font-size:11px;letter-spacing:0;color:rgba(140,140,140,0.8);transform:none">Activer Windows</div>
<div class="t" style="left:806.5px;top:477.4px;font-size:8.2px;letter-spacing:0;color:rgba(150,150,150,0.75);transform:none">Accédez aux paramètres pour activer Windows.</div>
<div style="left:0px;top:496.5px;width:1024px;height:15px;background:linear-gradient(#eee6f9,#d4cae6)"></div>
<div style="left:680.5px;top:500px;width:1px;height:10px;background:#b0a8c0"></div>
<div class="t" style="left:684px;top:500.4px;font-size:6.8px;letter-spacing:-0.35px;color:#222;transform:none">RTC Status</div>
<svg style="left:717px;top:500px" width="10" height="10"><circle cx="5" cy="5" r="4.6" fill="url(#bs)"/></svg>
<div style="left:733.3px;top:500px;width:1px;height:10px;background:#b0a8c0"></div>
<svg style="left:738.5px;top:499.5px" width="6" height="10"><circle cx="3" cy="2.3" r="1.9" fill="#c8a080"/><path d="M0.3 9.5Q0.3 4.5 3 4.5Q5.7 4.5 5.7 9.5Z" fill="#3a5a8a"/></svg>
<div class="t" style="left:748.5px;top:500.4px;font-size:6.8px;color:#222;transform:none">admin</div>
<div style="left:940px;top:505px;width:2px;height:1px;background:#aaa"></div>
<div style="left:955px;top:505px;width:1px;height:1px;background:#aaa"></div>
<div style="left:977px;top:505px;width:3px;height:1px;background:#5555aa"></div>
<div style="left:990px;top:504px;width:1px;height:2px;background:#aaa"></div>
</body></html>
